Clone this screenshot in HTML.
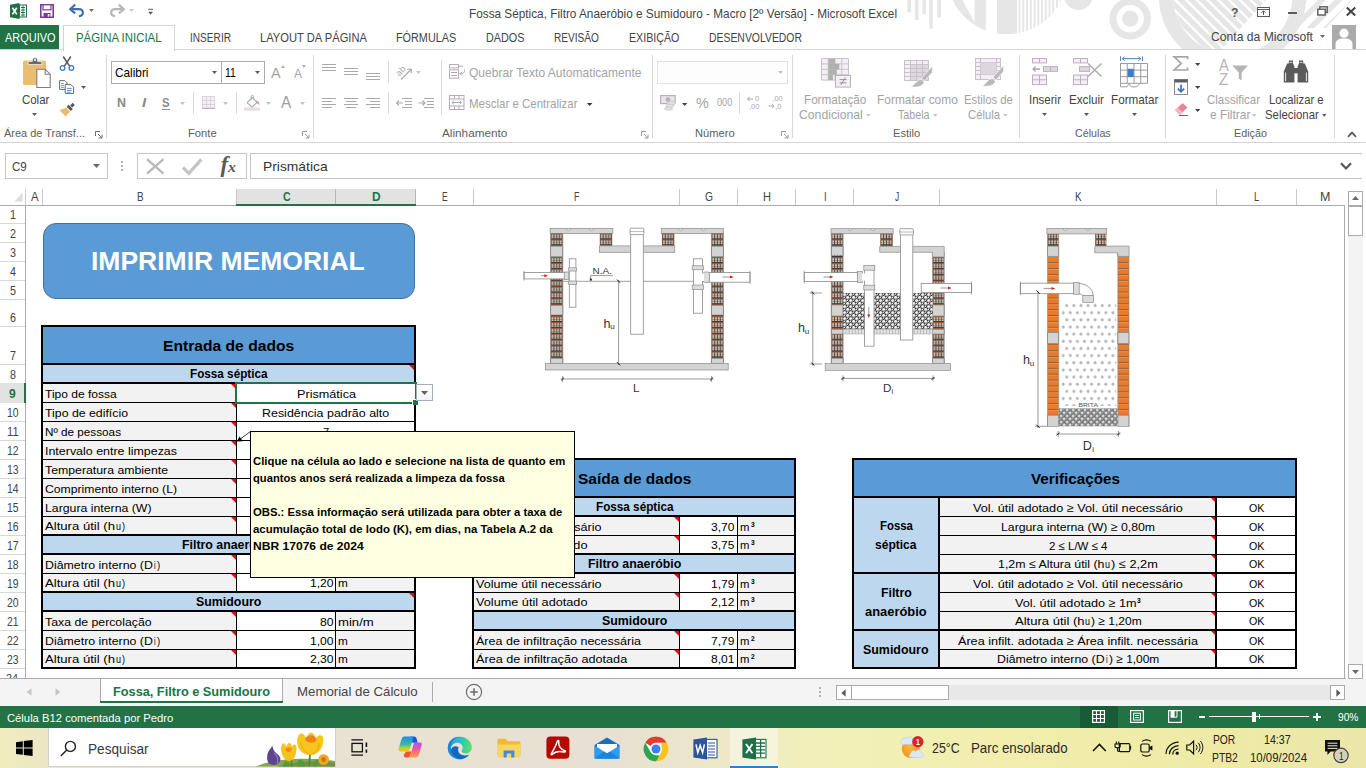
<!DOCTYPE html>
<html lang="pt-BR"><head><meta charset="utf-8"><title>Fossa Séptica, Filtro Anaeróbio e Sumidouro - Microsoft Excel</title>
<style>html,body{margin:0;padding:0;}body{width:1366px;height:768px;overflow:hidden;position:relative;background:#fff;font-family:'Liberation Sans', sans-serif;}div,span,svg{box-sizing:border-box;}svg{overflow:visible;}</style></head>
<body>
<svg style="position:absolute;left:0px;top:0px;overflow:hidden;" width="1366" height="49" viewBox="0 0 1366 49"><rect x="907.4" y="0" width="3.6" height="12.4" fill="#e6e6e6"/><rect x="914.9" y="0" width="3.7" height="20" fill="#e6e6e6"/><rect x="922.4" y="0" width="3.6" height="13.7" fill="#e6e6e6"/><rect x="929.3" y="0" width="3.5" height="28.6" fill="#e6e6e6"/><rect x="937.3" y="0" width="3.7" height="17.4" fill="#e6e6e6"/><clipPath id="cp1"><circle cx="1007" cy="-26" r="60.3"/></clipPath><g clip-path="url(#cp1)"><path d="M947 0H962.2L974.6 22V40H947Z" fill="#e6e6e6"/><rect x="974.6" y="0" width="11.2" height="40" fill="#e6e6e6"/><rect x="997" y="0" width="20" height="40" fill="#e6e6e6"/><rect x="1018.6" y="0" width="1.9" height="40" fill="#e6e6e6"/><rect x="1022.4" y="0" width="1.9" height="40" fill="#e6e6e6"/><rect x="1026.1" y="0" width="1.9" height="40" fill="#e6e6e6"/><rect x="1029.8" y="0" width="1.9" height="40" fill="#e6e6e6"/><rect x="1033.6" y="0" width="1.9" height="40" fill="#e6e6e6"/><rect x="1037.3" y="0" width="1.9" height="40" fill="#e6e6e6"/><rect x="1041.1" y="0" width="1.9" height="40" fill="#e6e6e6"/><rect x="1044.8" y="0" width="1.9" height="40" fill="#e6e6e6"/><rect x="1048.6" y="0" width="1.9" height="40" fill="#e6e6e6"/><rect x="1052.3" y="0" width="1.9" height="40" fill="#e6e6e6"/><rect x="1056.1" y="0" width="1.9" height="40" fill="#e6e6e6"/><rect x="1059.8" y="0" width="1.9" height="40" fill="#e6e6e6"/><rect x="1063.6" y="0" width="1.9" height="40" fill="#e6e6e6"/></g><circle cx="1078.5" cy="-4.3" r="14.3" fill="#e6e6e6"/><circle cx="1130.2" cy="18.7" r="17.2" fill="none" stroke="#e6e6e6" stroke-width="7"/><circle cx="1130.2" cy="18.7" r="8.1" fill="#e6e6e6"/><clipPath id="cp2"><rect x="1150" y="0" width="216" height="49"/></clipPath><g clip-path="url(#cp2)"><circle cx="1232.6" cy="-5" r="66.8" fill="none" stroke="#e6e6e6" stroke-width="14"/><clipPath id="cp3"><circle cx="1232.6" cy="-5" r="59.8"/></clipPath><clipPath id="cp5"><path d="M1150 0H1266L1222 49H1150Z"/></clipPath><g clip-path="url(#cp5)"><g clip-path="url(#cp3)"><path d="M1095.50 -10L1175.50 70" stroke="#e6e6e6" stroke-width="5.2"/><path d="M1106.25 -10L1186.25 70" stroke="#e6e6e6" stroke-width="5.2"/><path d="M1117.00 -10L1197.00 70" stroke="#e6e6e6" stroke-width="5.2"/><path d="M1127.75 -10L1207.75 70" stroke="#e6e6e6" stroke-width="5.2"/><path d="M1138.50 -10L1218.50 70" stroke="#e6e6e6" stroke-width="5.2"/><path d="M1149.25 -10L1229.25 70" stroke="#e6e6e6" stroke-width="5.2"/><path d="M1160.00 -10L1240.00 70" stroke="#e6e6e6" stroke-width="5.2"/><path d="M1170.75 -10L1250.75 70" stroke="#e6e6e6" stroke-width="5.2"/><path d="M1181.50 -10L1261.50 70" stroke="#e6e6e6" stroke-width="5.2"/><path d="M1192.25 -10L1272.25 70" stroke="#e6e6e6" stroke-width="5.2"/><path d="M1203.00 -10L1283.00 70" stroke="#e6e6e6" stroke-width="5.2"/><path d="M1213.75 -10L1293.75 70" stroke="#e6e6e6" stroke-width="5.2"/><path d="M1224.50 -10L1304.50 70" stroke="#e6e6e6" stroke-width="5.2"/><path d="M1235.25 -10L1315.25 70" stroke="#e6e6e6" stroke-width="5.2"/><path d="M1246.00 -10L1326.00 70" stroke="#e6e6e6" stroke-width="5.2"/><path d="M1256.75 -10L1336.75 70" stroke="#e6e6e6" stroke-width="5.2"/><path d="M1267.50 -10L1347.50 70" stroke="#e6e6e6" stroke-width="5.2"/><path d="M1278.25 -10L1358.25 70" stroke="#e6e6e6" stroke-width="5.2"/><path d="M1289.00 -10L1369.00 70" stroke="#e6e6e6" stroke-width="5.2"/><path d="M1299.75 -10L1379.75 70" stroke="#e6e6e6" stroke-width="5.2"/><path d="M1310.50 -10L1390.50 70" stroke="#e6e6e6" stroke-width="5.2"/><path d="M1321.25 -10L1401.25 70" stroke="#e6e6e6" stroke-width="5.2"/></g></g><clipPath id="cp4"><path d="M1292 0H1352L1326 28H1298Z"/></clipPath><g clip-path="url(#cp4)"><path d="M1262.0 60L1342.0 -20" stroke="#e6e6e6" stroke-width="5.6"/><path d="M1278.5 60L1358.5 -20" stroke="#e6e6e6" stroke-width="5.6"/><path d="M1295.0 60L1375.0 -20" stroke="#e6e6e6" stroke-width="5.6"/><path d="M1311.5 60L1391.5 -20" stroke="#e6e6e6" stroke-width="5.6"/><path d="M1328.0 60L1408.0 -20" stroke="#e6e6e6" stroke-width="5.6"/><path d="M1344.5 60L1424.5 -20" stroke="#e6e6e6" stroke-width="5.6"/><path d="M1361.0 60L1441.0 -20" stroke="#e6e6e6" stroke-width="5.6"/><path d="M1377.5 60L1457.5 -20" stroke="#e6e6e6" stroke-width="5.6"/><path d="M1394.0 60L1474.0 -20" stroke="#e6e6e6" stroke-width="5.6"/></g></g></svg>
<svg style="position:absolute;left:10px;top:3px;" width="17" height="16" viewBox="0 0 17 16"><path d="M0 1.8L9.5 0V16L0 14.2Z" fill="#1e7145"/><rect x="9.5" y="2" width="7" height="12" fill="#fff" stroke="#1e7145" stroke-width="1"/><path d="M11 4.5h4M11 7h4M11 9.5h4M11 12h4" stroke="#1e7145" stroke-width="1"/><path d="M13 2.5v11" stroke="#1e7145" stroke-width="0.8"/><path d="M2.4 4.8L6.8 11.4M6.8 4.8L2.4 11.4" stroke="#fff" stroke-width="1.7"/></svg>
<svg style="position:absolute;left:40px;top:4px;" width="14" height="14" viewBox="0 0 14 14"><path d="M0.8 0.8H13.2V13.2H0.8Z" fill="#fff" stroke="#7a3c98" stroke-width="1.6"/><rect x="3" y="0.8" width="8" height="5" fill="#fff" stroke="#7a3c98" stroke-width="1.2"/><rect x="3.5" y="9" width="7" height="4.2" fill="#7a3c98"/><rect x="7.8" y="10" width="1.6" height="2.6" fill="#fff"/></svg>
<svg style="position:absolute;left:69px;top:4px;" width="17" height="13" viewBox="0 0 17 13"><path d="M6.2 0.6L1.2 5.2L6.2 9.4" fill="none" stroke="#3a6db5" stroke-width="2.1"/><path d="M1.8 5.1H9.5C15 5.1 15.5 11.5 10 12.2" fill="none" stroke="#3a6db5" stroke-width="2.1"/></svg>
<svg style="position:absolute;left:89px;top:9px;" width="5" height="3" viewBox="0 0 5 3"><path d="M0 0H5L2.5 3Z" fill="#6a6a6a"/></svg>
<svg style="position:absolute;left:108px;top:4px;" width="17" height="13" viewBox="0 0 17 13"><path d="M10.8 0.6L15.8 5.2L10.8 9.4" fill="none" stroke="#b8b8b8" stroke-width="2.2"/><path d="M15.2 5.1H7.5C2 5.1 1.5 11.5 7 12.2" fill="none" stroke="#b8b8b8" stroke-width="2.2"/></svg>
<svg style="position:absolute;left:129px;top:9px;" width="5" height="3" viewBox="0 0 5 3"><path d="M0 0H5L2.5 3Z" fill="#c8c8c8"/></svg>
<svg style="position:absolute;left:148px;top:8px;" width="6" height="8" viewBox="0 0 6 8"><path d="M0.2 1.3H5" stroke="#5a5a5a" stroke-width="1"/><path d="M0.2 3.8H5L2.6 6.8Z" fill="#5a5a5a"/></svg>
<span style="position:absolute;left:468.50px;top:8.02px;font-family:'Liberation Sans', sans-serif;font-size:12.2px;line-height:12.2px;font-weight:400;color:#444;white-space:pre;transform-origin:0 0;transform:scaleX(0.9668);">Fossa Séptica, Filtro Anaeróbio e Sumidouro - Macro [2º Versão] - Microsoft Excel</span>
<span style="position:absolute;left:1231.00px;top:6.02px;font-family:'Liberation Sans', sans-serif;font-size:13px;line-height:13px;font-weight:700;color:#5a5a5a;white-space:pre;transform-origin:0 0;transform:scaleX(0.9430);">?</span>
<svg style="position:absolute;left:1257px;top:7px;" width="13" height="10" viewBox="0 0 13 10"><rect x="0.5" y="0.5" width="12" height="9" fill="none" stroke="#5a5a5a"/><path d="M0.5 2.5H12.5" stroke="#5a5a5a"/><path d="M6.5 8V4M4.5 5.8L6.5 3.8L8.5 5.8" fill="none" stroke="#5a5a5a"/></svg>
<div style="position:absolute;left:1288px;top:12px;width:9px;height:2px;background:#5a5a5a;"></div>
<svg style="position:absolute;left:1317px;top:6px;" width="11" height="10" viewBox="0 0 11 10"><rect x="2.8" y="0.8" width="7.4" height="5.6" fill="none" stroke="#5a5a5a" stroke-width="1.4"/><rect x="0.8" y="3.2" width="7.4" height="5.8" fill="#fff" stroke="#5a5a5a" stroke-width="1.4"/></svg>
<svg style="position:absolute;left:1346px;top:7px;" width="10" height="9" viewBox="0 0 10 9"><path d="M0.8 0.5L9.2 8.5M9.2 0.5L0.8 8.5" stroke="#444" stroke-width="2"/></svg>
<div style="position:absolute;left:0px;top:25px;width:59px;height:25px;background:#217346;"></div>
<span style="position:absolute;left:4.50px;top:32.02px;font-family:'Liberation Sans', sans-serif;font-size:12px;line-height:12px;font-weight:400;color:#fff;white-space:pre;transform-origin:0 0;transform:scaleX(0.9125);">ARQUIVO</span>
<div style="position:absolute;left:0px;top:49px;width:1366px;height:1px;background:#d4d4d4;"></div>
<div style="position:absolute;left:63px;top:25px;width:112px;height:26px;background:#fff;border:1px solid #d4d4d4;border-bottom:none;"></div>
<span style="position:absolute;left:76.00px;top:32.02px;font-family:'Liberation Sans', sans-serif;font-size:12px;line-height:12px;font-weight:400;color:#217346;white-space:pre;transform-origin:0 0;transform:scaleX(0.9497);">PÁGINA INICIAL</span>
<span style="position:absolute;left:189.50px;top:32.02px;font-family:'Liberation Sans', sans-serif;font-size:12px;line-height:12px;font-weight:400;color:#444444;white-space:pre;transform-origin:0 0;transform:scaleX(0.8421);">INSERIR</span>
<span style="position:absolute;left:260.00px;top:32.02px;font-family:'Liberation Sans', sans-serif;font-size:12px;line-height:12px;font-weight:400;color:#444444;white-space:pre;transform-origin:0 0;transform:scaleX(0.9309);">LAYOUT DA PÁGINA</span>
<span style="position:absolute;left:396.40px;top:32.02px;font-family:'Liberation Sans', sans-serif;font-size:12px;line-height:12px;font-weight:400;color:#444444;white-space:pre;transform-origin:0 0;transform:scaleX(0.9027);">FÓRMULAS</span>
<span style="position:absolute;left:486.40px;top:32.02px;font-family:'Liberation Sans', sans-serif;font-size:12px;line-height:12px;font-weight:400;color:#444444;white-space:pre;transform-origin:0 0;transform:scaleX(0.8996);">DADOS</span>
<span style="position:absolute;left:554.30px;top:32.02px;font-family:'Liberation Sans', sans-serif;font-size:12px;line-height:12px;font-weight:400;color:#444444;white-space:pre;transform-origin:0 0;transform:scaleX(0.8396);">REVISÃO</span>
<span style="position:absolute;left:629.20px;top:32.02px;font-family:'Liberation Sans', sans-serif;font-size:12px;line-height:12px;font-weight:400;color:#444444;white-space:pre;transform-origin:0 0;transform:scaleX(0.8891);">EXIBIÇÃO</span>
<span style="position:absolute;left:709.00px;top:32.02px;font-family:'Liberation Sans', sans-serif;font-size:12px;line-height:12px;font-weight:400;color:#444444;white-space:pre;transform-origin:0 0;transform:scaleX(0.8680);">DESENVOLVEDOR</span>
<span style="position:absolute;left:1211.00px;top:31.02px;font-family:'Liberation Sans', sans-serif;font-size:12.2px;line-height:12.2px;font-weight:400;color:#444444;white-space:pre;transform-origin:0 0;transform:scaleX(0.9971);">Conta da Microsoft</span>
<svg style="position:absolute;left:1320px;top:35px;" width="5" height="3" viewBox="0 0 5 3"><path d="M0 0H5L2.5 3Z" fill="#6a6a6a"/></svg>
<svg style="position:absolute;left:1332px;top:25px;" width="24" height="24" viewBox="0 0 24 24"><rect width="24" height="24" fill="#ababab"/><circle cx="12" cy="8.2" r="4.6" fill="#fff"/><path d="M3.5 24V19.5C3.5 15 7 13.6 12 13.6S20.5 15 20.5 19.5V24Z" fill="#fff"/></svg>
<div style="position:absolute;left:0px;top:142px;width:1366px;height:1px;background:#d4d4d4;"></div>
<div style="position:absolute;left:106px;top:55px;width:1px;height:83px;background:#d9d9d9;"></div>
<div style="position:absolute;left:313px;top:55px;width:1px;height:83px;background:#d9d9d9;"></div>
<div style="position:absolute;left:652px;top:55px;width:1px;height:83px;background:#d9d9d9;"></div>
<div style="position:absolute;left:792px;top:55px;width:1px;height:83px;background:#d9d9d9;"></div>
<div style="position:absolute;left:1019px;top:55px;width:1px;height:83px;background:#d9d9d9;"></div>
<div style="position:absolute;left:1165px;top:55px;width:1px;height:83px;background:#d9d9d9;"></div>
<div style="position:absolute;left:1334px;top:55px;width:1px;height:83px;background:#d9d9d9;"></div>
<div style="position:absolute;left:193px;top:92px;width:1px;height:22px;background:#d9d9d9;"></div>
<div style="position:absolute;left:236px;top:92px;width:1px;height:22px;background:#d9d9d9;"></div>
<div style="position:absolute;left:388px;top:61px;width:1px;height:22px;background:#d9d9d9;"></div>
<div style="position:absolute;left:388px;top:92px;width:1px;height:22px;background:#d9d9d9;"></div>
<div style="position:absolute;left:441px;top:60px;width:1px;height:55px;background:#d9d9d9;"></div>
<div style="position:absolute;left:739px;top:92px;width:1px;height:22px;background:#d9d9d9;"></div>
<span style="position:absolute;left:4.20px;top:127.02px;font-family:'Liberation Sans', sans-serif;font-size:11.6px;line-height:11.6px;font-weight:400;color:#5e5e5e;white-space:pre;transform-origin:0 0;transform:scaleX(0.9450);">Área de Transf...</span>
<span style="position:absolute;left:187.70px;top:127.02px;font-family:'Liberation Sans', sans-serif;font-size:11.6px;line-height:11.6px;font-weight:400;color:#5e5e5e;white-space:pre;transform-origin:0 0;transform:scaleX(0.9678);">Fonte</span>
<span style="position:absolute;left:442.20px;top:127.02px;font-family:'Liberation Sans', sans-serif;font-size:11.6px;line-height:11.6px;font-weight:400;color:#5e5e5e;white-space:pre;transform-origin:0 0;transform:scaleX(1.0147);">Alinhamento</span>
<span style="position:absolute;left:694.70px;top:127.02px;font-family:'Liberation Sans', sans-serif;font-size:11.6px;line-height:11.6px;font-weight:400;color:#5e5e5e;white-space:pre;transform-origin:0 0;transform:scaleX(0.9600);">Número</span>
<span style="position:absolute;left:892.50px;top:127.02px;font-family:'Liberation Sans', sans-serif;font-size:11.6px;line-height:11.6px;font-weight:400;color:#5e5e5e;white-space:pre;transform-origin:0 0;transform:scaleX(0.9626);">Estilo</span>
<span style="position:absolute;left:1074.80px;top:127.02px;font-family:'Liberation Sans', sans-serif;font-size:11.6px;line-height:11.6px;font-weight:400;color:#5e5e5e;white-space:pre;transform-origin:0 0;transform:scaleX(0.9232);">Células</span>
<span style="position:absolute;left:1233.80px;top:127.02px;font-family:'Liberation Sans', sans-serif;font-size:11.6px;line-height:11.6px;font-weight:400;color:#5e5e5e;white-space:pre;transform-origin:0 0;transform:scaleX(0.9308);">Edição</span>
<svg style="position:absolute;left:95px;top:130.5px;" width="8" height="8" viewBox="0 0 8 8"><path d="M0.5 5V0.5H5" fill="none" stroke="#6e6e6e" stroke-width="1"/><path d="M3 3L7 7M7 3.5V7H3.5" fill="none" stroke="#6e6e6e" stroke-width="1"/></svg>
<svg style="position:absolute;left:302px;top:130.5px;" width="8" height="8" viewBox="0 0 8 8"><path d="M0.5 5V0.5H5" fill="none" stroke="#9a9a9a" stroke-width="1"/><path d="M3 3L7 7M7 3.5V7H3.5" fill="none" stroke="#9a9a9a" stroke-width="1"/></svg>
<svg style="position:absolute;left:641px;top:130.5px;" width="8" height="8" viewBox="0 0 8 8"><path d="M0.5 5V0.5H5" fill="none" stroke="#9a9a9a" stroke-width="1"/><path d="M3 3L7 7M7 3.5V7H3.5" fill="none" stroke="#9a9a9a" stroke-width="1"/></svg>
<svg style="position:absolute;left:781px;top:130.5px;" width="8" height="8" viewBox="0 0 8 8"><path d="M0.5 5V0.5H5" fill="none" stroke="#9a9a9a" stroke-width="1"/><path d="M3 3L7 7M7 3.5V7H3.5" fill="none" stroke="#9a9a9a" stroke-width="1"/></svg>
<svg style="position:absolute;left:22px;top:57px;" width="30" height="32" viewBox="0 0 30 32"><rect x="1" y="3.5" width="23" height="24.5" rx="1.5" fill="#eabe72"/><path d="M6.2 7.6V4.4H10.4V2.8C10.4 0.2 15.6 0.2 15.6 2.8V4.4H19.8V7.6Z" fill="#6b6b6b" stroke="#fff" stroke-width="0.7"/><circle cx="13" cy="3" r="1.1" fill="#fff"/><path d="M14.8 12.2H23.2L28.2 17.2V30.5H14.8Z" fill="#fff" stroke="#7e7e7e" stroke-width="1.1"/><path d="M23.2 12.2V17.2H28.2" fill="none" stroke="#7e7e7e" stroke-width="1.1"/></svg>
<span style="position:absolute;left:21.50px;top:94.02px;font-family:'Liberation Sans', sans-serif;font-size:12.4px;line-height:12.4px;font-weight:400;color:#444444;white-space:pre;transform-origin:0 0;transform:scaleX(0.9220);">Colar</span>
<svg style="position:absolute;left:32px;top:113.4px;" width="5" height="3" viewBox="0 0 5 3"><path d="M0 0H5L2.5 3Z" fill="#5a5a5a"/></svg>
<svg style="position:absolute;left:59px;top:56px;" width="16" height="15" viewBox="0 0 16 15"><path d="M4.2 0.5L10.6 10.2M11.8 0.5L5.4 10.2" stroke="#5a5a5a" stroke-width="1.5"/><circle cx="3.6" cy="12" r="2.3" fill="none" stroke="#3d78c4" stroke-width="1.3"/><circle cx="12.4" cy="12" r="2.3" fill="none" stroke="#3d78c4" stroke-width="1.3"/></svg>
<svg style="position:absolute;left:59px;top:80px;" width="16" height="14" viewBox="0 0 16 14"><path d="M0.6 0.6H5.8L8 2.8V9.4H0.6Z" fill="#fff" stroke="#6a6a6a" stroke-width="1"/><path d="M2 3.6H4.8M2 5.6H4.8M2 7.4H4.8" stroke="#3d78c4" stroke-width="0.8"/><path d="M6.2 4.4H11.8L14.6 7.2V13.4H6.2Z" fill="#fff" stroke="#6a6a6a" stroke-width="1"/><path d="M8 8.4H12.8M8 10.4H12.8M8 12.2H11.6" stroke="#3d78c4" stroke-width="0.8"/></svg>
<svg style="position:absolute;left:81px;top:86.4px;" width="5" height="3" viewBox="0 0 5 3"><path d="M0 0H5L2.5 3Z" fill="#5a5a5a"/></svg>
<svg style="position:absolute;left:59px;top:102px;" width="17" height="15" viewBox="0 0 17 15"><path d="M0.5 8.2L7 5.6L11.2 9.8L6.6 14.5Z" fill="#eabe72"/><path d="M7.6 4.8L9.6 2.8L13.8 7L11.8 9Z" fill="#555"/><path d="M11.2 3.4L13.6 0.8L15.8 3L13.2 5.4Z" fill="#555"/></svg>
<div style="position:absolute;left:111px;top:61px;width:111px;height:23px;background:#fff;border:1px solid #ababab;"></div>
<div style="position:absolute;left:221px;top:61px;width:44px;height:23px;background:#fff;border:1px solid #ababab;"></div>
<span style="position:absolute;left:114.50px;top:67.02px;font-family:'Liberation Sans', sans-serif;font-size:12.4px;line-height:12.4px;font-weight:400;color:#000;white-space:pre;transform-origin:0 0;transform:scaleX(0.9537);">Calibri</span>
<span style="position:absolute;left:225.30px;top:67.02px;font-family:'Liberation Sans', sans-serif;font-size:12.4px;line-height:12.4px;font-weight:400;color:#000;white-space:pre;transform-origin:0 0;transform:scaleX(0.8388);">11</span>
<svg style="position:absolute;left:212px;top:71px;" width="5" height="3" viewBox="0 0 5 3"><path d="M0 0H5L2.5 3Z" fill="#5a5a5a"/></svg>
<svg style="position:absolute;left:255px;top:71px;" width="5" height="3" viewBox="0 0 5 3"><path d="M0 0H5L2.5 3Z" fill="#5a5a5a"/></svg>
<span style="position:absolute;left:271.40px;top:66.02px;font-family:'Liberation Sans', sans-serif;font-size:14.5px;line-height:14.5px;font-weight:400;color:#a3a3a3;white-space:pre;transform-origin:0 0;transform:scaleX(0.9926);">A</span>
<svg style="position:absolute;left:281px;top:64.6px;" width="4" height="3" viewBox="0 0 4 3"><path d="M0 3H4L2 0Z" fill="#b0b0b0"/></svg>
<span style="position:absolute;left:294.00px;top:68.02px;font-family:'Liberation Sans', sans-serif;font-size:12.5px;line-height:12.5px;font-weight:400;color:#a3a3a3;white-space:pre;transform-origin:0 0;transform:scaleX(0.9588);">A</span>
<svg style="position:absolute;left:302px;top:65.4px;" width="4" height="3" viewBox="0 0 4 3"><path d="M0 0H4L2 3Z" fill="#b0b0b0"/></svg>
<span style="position:absolute;left:117.40px;top:97.02px;font-family:'Liberation Sans', sans-serif;font-size:12.2px;line-height:12.2px;font-weight:700;color:#8a8a8a;white-space:pre;transform-origin:0 0;transform:scaleX(1.0213);">N</span>
<span style="position:absolute;left:141.60px;top:97.02px;font-family:'Liberation Sans', sans-serif;font-size:12.2px;line-height:12.2px;font-weight:700;color:#8a8a8a;white-space:pre;transform-origin:0 0;transform:scaleX(1.2387);font-style:italic;">I</span>
<span style="position:absolute;left:162.40px;top:97.02px;font-family:'Liberation Sans', sans-serif;font-size:12.2px;line-height:12.2px;font-weight:700;color:#8a8a8a;white-space:pre;transform-origin:0 0;transform:scaleX(0.9336);">S</span>
<div style="position:absolute;left:162px;top:108.6px;width:8px;height:1px;background:#8e8e8e;"></div>
<svg style="position:absolute;left:180px;top:101.5px;" width="5" height="3" viewBox="0 0 5 3"><path d="M0 0H5L2.5 3Z" fill="#c0c0c0"/></svg>
<svg style="position:absolute;left:202px;top:96px;" width="14" height="14" viewBox="0 0 14 14"><rect x="0" y="0" width="13" height="11" fill="#f4eff5"/><path d="M0.5 0.5H12.5M0.5 4.5H12.5M0.5 8.5H12.5M0.5 0.5V11M4.5 0.5V11M8.5 0.5V11M12.5 0.5V11" stroke="#c9bcd0" stroke-width="1" stroke-dasharray="1 1"/><path d="M0 12.3H13.2" stroke="#b4b4b4" stroke-width="1.4"/></svg>
<svg style="position:absolute;left:223px;top:101.5px;" width="5" height="3" viewBox="0 0 5 3"><path d="M0 0H5L2.5 3Z" fill="#c0c0c0"/></svg>
<svg style="position:absolute;left:244px;top:95px;" width="17" height="16" viewBox="0 0 17 16"><path d="M3.2 7.6L8.2 2.6L13 7.4L8 12.2Z" fill="#fff" stroke="#a9a9a9" stroke-width="1.1"/><path d="M7.2 5.2V1.6C7.2 0 9.6 0 9.6 1.6V4" fill="none" stroke="#a9a9a9" stroke-width="1"/><path d="M12.2 5.2C15 6 15.8 8.6 15.2 10.6C14.4 9 13.6 8.4 12.6 8Z" fill="#a9a9a9"/><rect x="0" y="12.4" width="16" height="3.4" fill="#e6dfe6"/></svg>
<svg style="position:absolute;left:266px;top:101.5px;" width="5" height="3" viewBox="0 0 5 3"><path d="M0 0H5L2.5 3Z" fill="#c0c0c0"/></svg>
<span style="position:absolute;left:281.20px;top:95.02px;font-family:'Liberation Sans', sans-serif;font-size:15.6px;line-height:15.6px;font-weight:400;color:#9c9c9c;white-space:pre;transform-origin:0 0;transform:scaleX(0.9802);">A</span>
<svg style="position:absolute;left:300px;top:101.5px;" width="5" height="3" viewBox="0 0 5 3"><path d="M0 0H5L2.5 3Z" fill="#c0c0c0"/></svg>
<svg style="position:absolute;left:322px;top:0px;" width="14" height="120" viewBox="0 0 14 120"><path d="M0 64.5H14" stroke="#a9a9a9" stroke-width="1"/><path d="M0 67.5H14" stroke="#a9a9a9" stroke-width="1"/><path d="M0 70.5H14" stroke="#a9a9a9" stroke-width="1"/></svg>
<svg style="position:absolute;left:344px;top:0px;" width="14" height="120" viewBox="0 0 14 120"><path d="M0 68.5H14" stroke="#a9a9a9" stroke-width="1"/><path d="M0 71.5H14" stroke="#a9a9a9" stroke-width="1"/><path d="M0 74.5H14" stroke="#a9a9a9" stroke-width="1"/></svg>
<svg style="position:absolute;left:366px;top:0px;" width="14" height="120" viewBox="0 0 14 120"><path d="M0 73.5H14" stroke="#a9a9a9" stroke-width="1"/><path d="M0 76.5H14" stroke="#a9a9a9" stroke-width="1"/><path d="M0 79.5H14" stroke="#a9a9a9" stroke-width="1"/></svg>
<svg style="position:absolute;left:322px;top:0px;" width="14" height="120" viewBox="0 0 14 120"><path d="M0 98.5H14" stroke="#a9a9a9" stroke-width="1"/><path d="M0 101.5H10" stroke="#a9a9a9" stroke-width="1"/><path d="M0 104.5H14" stroke="#a9a9a9" stroke-width="1"/><path d="M0 107.5H10" stroke="#a9a9a9" stroke-width="1"/></svg>
<svg style="position:absolute;left:344px;top:0px;" width="14" height="120" viewBox="0 0 14 120"><path d="M0.0 98.5H14.0" stroke="#a9a9a9" stroke-width="1"/><path d="M2.0 101.5H12.0" stroke="#a9a9a9" stroke-width="1"/><path d="M0.0 104.5H14.0" stroke="#a9a9a9" stroke-width="1"/><path d="M2.0 107.5H12.0" stroke="#a9a9a9" stroke-width="1"/></svg>
<svg style="position:absolute;left:366px;top:0px;" width="14" height="120" viewBox="0 0 14 120"><path d="M0 98.5H14" stroke="#a9a9a9" stroke-width="1"/><path d="M4 101.5H14" stroke="#a9a9a9" stroke-width="1"/><path d="M0 104.5H14" stroke="#a9a9a9" stroke-width="1"/><path d="M4 107.5H14" stroke="#a9a9a9" stroke-width="1"/></svg>
<svg style="position:absolute;left:396px;top:63px;" width="18" height="18" viewBox="0 0 18 18"><text x="0" y="10" font-family="Liberation Sans, sans-serif" font-size="9" fill="#a9a9a9" transform="rotate(-45 6 8)">ab</text><path d="M5 16.5L15 6.5M11.2 6.2H15.3V10.3" fill="none" stroke="#a9a9a9" stroke-width="1.1"/></svg>
<svg style="position:absolute;left:416px;top:71px;" width="5" height="3" viewBox="0 0 5 3"><path d="M0 0H5L2.5 3Z" fill="#c8c8c8"/></svg>
<svg style="position:absolute;left:396px;top:97px;" width="16" height="12" viewBox="0 0 16 12"><path d="M6 1.5H16M9 4.5H16M9 7.5H16M6 10.5H16" stroke="#a9a9a9" stroke-width="1"/><path d="M0.5 6H7M3 3.5L0.5 6L3 8.5" fill="none" stroke="#a9a9a9" stroke-width="1.1"/></svg>
<svg style="position:absolute;left:418px;top:97px;" width="16" height="12" viewBox="0 0 16 12"><path d="M6 1.5H16M9 4.5H16M9 7.5H16M6 10.5H16" stroke="#a9a9a9" stroke-width="1"/><path d="M0.5 6H7M4.5 3.5L7 6L4.5 8.5" fill="none" stroke="#a9a9a9" stroke-width="1.1"/></svg>
<svg style="position:absolute;left:449px;top:64px;" width="16" height="15" viewBox="0 0 16 15"><rect x="0.5" y="0.5" width="9" height="3.4" fill="none" stroke="#b9a9bd"/><path d="M10 2.2H14" stroke="#a9a9a9"/><rect x="0.5" y="5.8" width="9" height="8.4" fill="none" stroke="#b9a9bd"/><path d="M2 8.5H8M2 11.5H8" stroke="#a9a9a9"/><path d="M15.5 5.5C15.8 9 14 9.8 11 9.8M12.8 8L11 9.8L12.8 11.6" fill="none" stroke="#a9a9a9" stroke-width="1"/></svg>
<span style="position:absolute;left:468.50px;top:67.02px;font-family:'Liberation Sans', sans-serif;font-size:12.4px;line-height:12.4px;font-weight:400;color:#a3a3a3;white-space:pre;transform-origin:0 0;transform:scaleX(0.9720);">Quebrar Texto Automaticamente</span>
<svg style="position:absolute;left:449px;top:95px;" width="16" height="15" viewBox="0 0 16 15"><rect x="0.5" y="0.5" width="14.5" height="14" fill="#fff" stroke="#b9a9bd"/><path d="M0.5 4H15M0.5 11H15M5.5 0.5V4M10 0.5V4M5.5 11V14.5M10 11V14.5" stroke="#b9a9bd"/><path d="M3 7.5H12.5M4.8 5.8L3 7.5L4.8 9.2M10.7 5.8L12.5 7.5L10.7 9.2" fill="none" stroke="#a9a9a9" stroke-width="1"/></svg>
<span style="position:absolute;left:468.50px;top:98.02px;font-family:'Liberation Sans', sans-serif;font-size:12.4px;line-height:12.4px;font-weight:400;color:#a3a3a3;white-space:pre;transform-origin:0 0;transform:scaleX(0.9269);">Mesclar e Centralizar</span>
<svg style="position:absolute;left:587px;top:102.6px;" width="5.4" height="3" viewBox="0 0 5.4 3"><path d="M0 0H5.4L2.7 3Z" fill="#333"/></svg>
<div style="position:absolute;left:657px;top:61px;width:131px;height:23px;background:#fdfdfd;border:1px solid #e1e1e1;"></div>
<svg style="position:absolute;left:778px;top:71px;" width="5" height="3" viewBox="0 0 5 3"><path d="M0 0H5L2.5 3Z" fill="#c0c0c0"/></svg>
<svg style="position:absolute;left:660px;top:95px;" width="17" height="16" viewBox="0 0 17 16"><rect x="0.6" y="0.6" width="14.6" height="8" fill="#e9e4ea" stroke="#b4b4b4" stroke-width="1.2"/><circle cx="8" cy="4.6" r="2.4" fill="#b4b4b4"/><ellipse cx="11.5" cy="8" rx="4.2" ry="1.6" fill="#e2e2e2" stroke="#c4c4c4" stroke-width="0.7"/><ellipse cx="10" cy="10.8" rx="4.2" ry="1.6" fill="#e2e2e2" stroke="#c4c4c4" stroke-width="0.7"/><ellipse cx="8.5" cy="13.6" rx="4.2" ry="1.6" fill="#e2e2e2" stroke="#c4c4c4" stroke-width="0.7"/></svg>
<svg style="position:absolute;left:682px;top:102.6px;" width="5.4" height="3" viewBox="0 0 5.4 3"><path d="M0 0H5.4L2.7 3Z" fill="#444"/></svg>
<span style="position:absolute;left:696.40px;top:96.02px;font-family:'Liberation Sans', sans-serif;font-size:14.6px;line-height:14.6px;font-weight:400;color:#a3a3a3;white-space:pre;transform-origin:0 0;transform:scaleX(0.9858);">%</span>
<span style="position:absolute;left:716.60px;top:98.02px;font-family:'Liberation Sans', sans-serif;font-size:10px;line-height:10px;font-weight:400;color:#a3a3a3;white-space:pre;transform-origin:0 0;transform:scaleX(0.9109);">000</span>
<svg style="position:absolute;left:747px;top:95px;" width="15" height="16" viewBox="0 0 15 16"><path d="M0.6 4H6M2.6 1.8L0.6 4L2.6 6.2" fill="none" stroke="#a9a9a9" stroke-width="1"/><text x="8" y="6.2" font-family="Liberation Sans, sans-serif" font-size="7.4" fill="#a9a9a9">0</text><text x="2" y="14.4" font-family="Liberation Sans, sans-serif" font-size="7.4" fill="#a9a9a9">,00</text></svg>
<svg style="position:absolute;left:768px;top:95px;" width="16" height="16" viewBox="0 0 16 16"><text x="4.4" y="6.2" font-family="Liberation Sans, sans-serif" font-size="7.4" fill="#a9a9a9">,00</text><path d="M0.4 11H6M4 8.8L6 11L4 13.2" fill="none" stroke="#a9a9a9" stroke-width="1"/><text x="7.2" y="14.4" font-family="Liberation Sans, sans-serif" font-size="7.4" fill="#a9a9a9">,0</text></svg>
<svg style="position:absolute;left:821px;top:58px;" width="31" height="30" viewBox="0 0 31 30"><rect x="0.5" y="0.5" width="27" height="21.6" fill="#f3eff4"/><path d="M0.5 0.5H27.5" stroke="#c9c2cc"/><path d="M0.5 5.9H27.5" stroke="#c9c2cc"/><path d="M0.5 11.3H27.5" stroke="#c9c2cc"/><path d="M0.5 16.700000000000003H27.5" stroke="#c9c2cc"/><path d="M0.5 22.1H27.5" stroke="#c9c2cc"/><path d="M0.5 0.5V22.1" stroke="#c9c2cc"/><path d="M7.25 0.5V22.1" stroke="#c9c2cc"/><path d="M14.0 0.5V22.1" stroke="#c9c2cc"/><path d="M20.75 0.5V22.1" stroke="#c9c2cc"/><path d="M27.5 0.5V22.1" stroke="#c9c2cc"/><rect x="7.3" y="0.5" width="6.7" height="5.4" fill="#b1b1b1"/><rect x="7.3" y="5.9" width="11" height="5.4" fill="#b1b1b1"/><rect x="7.3" y="11.3" width="8.5" height="5.4" fill="#b1b1b1"/><rect x="7.3" y="16.7" width="4.6" height="5.4" fill="#b1b1b1"/><rect x="14.5" y="17.5" width="15" height="11.6" fill="#f3eff4" stroke="#b4b4b4"/><path d="M18.6 21.6H25.6M18.6 24.8H25.6M24.4 19.6L19.8 27" stroke="#8c8c8c" stroke-width="0.9"/></svg>
<span style="position:absolute;left:804.20px;top:94.02px;font-family:'Liberation Sans', sans-serif;font-size:12.4px;line-height:12.4px;font-weight:400;color:#a3a3a3;white-space:pre;transform-origin:0 0;transform:scaleX(0.9422);">Formatação</span>
<span style="position:absolute;left:799.20px;top:109.02px;font-family:'Liberation Sans', sans-serif;font-size:12.4px;line-height:12.4px;font-weight:400;color:#a3a3a3;white-space:pre;transform-origin:0 0;transform:scaleX(0.9853);">Condicional</span>
<svg style="position:absolute;left:865.6px;top:113.6px;" width="4.6" height="2.8" viewBox="0 0 4.6 2.8"><path d="M0 0H4.6L2.3 2.8Z" fill="#c4c4c4"/></svg>
<svg style="position:absolute;left:904px;top:60px;" width="30" height="28" viewBox="0 0 30 28"><rect x="0.5" y="0.5" width="24" height="20" fill="#f3eff4"/><rect x="6.5" y="4.5" width="18" height="16" fill="#dcd8de"/><path d="M0.5 0.5H24.5" stroke="#c9c2cc"/><path d="M0.5 4.5H24.5" stroke="#c9c2cc"/><path d="M0.5 8.5H24.5" stroke="#c9c2cc"/><path d="M0.5 12.5H24.5" stroke="#c9c2cc"/><path d="M0.5 16.5H24.5" stroke="#c9c2cc"/><path d="M0.5 20.5H24.5" stroke="#c9c2cc"/><path d="M0.5 0.5V20.5" stroke="#c9c2cc"/><path d="M6.5 0.5V20.5" stroke="#c9c2cc"/><path d="M12.5 0.5V20.5" stroke="#c9c2cc"/><path d="M18.5 0.5V20.5" stroke="#c9c2cc"/><path d="M24.5 0.5V20.5" stroke="#c9c2cc"/><path d="M17.6 18.2l10.8 -12v6l-7.6 8.6Z" fill="#b9b9b9" stroke="#fff" stroke-width="0.6"/><path d="M17.2 19.4c-4 0.2 -4.8 3.4 -9.8 7.4c5.6 1 11.4 -0.6 12.8 -4.6Z" fill="#b9b9b9" stroke="#fff" stroke-width="0.6"/></svg>
<span style="position:absolute;left:876.50px;top:94.02px;font-family:'Liberation Sans', sans-serif;font-size:12.4px;line-height:12.4px;font-weight:400;color:#a3a3a3;white-space:pre;transform-origin:0 0;transform:scaleX(0.9619);">Formatar como</span>
<span style="position:absolute;left:897.90px;top:109.02px;font-family:'Liberation Sans', sans-serif;font-size:12.4px;line-height:12.4px;font-weight:400;color:#a3a3a3;white-space:pre;transform-origin:0 0;transform:scaleX(0.8626);">Tabela</span>
<svg style="position:absolute;left:932.6px;top:113.6px;" width="4.6" height="2.8" viewBox="0 0 4.6 2.8"><path d="M0 0H4.6L2.3 2.8Z" fill="#c4c4c4"/></svg>
<svg style="position:absolute;left:975px;top:58px;" width="30" height="30" viewBox="0 0 30 30"><rect x="0.5" y="0.5" width="25" height="21" fill="#f3eff4" stroke="#c9c2cc"/><path d="M0.5 4.5H25.5M0.5 16.5H25.5M5.5 0.5V21.5M21.5 0.5V21.5M0.5 8.5H5.5M0.5 12.5H5.5M21.5 8.5H25.5M21.5 12.5H25.5" stroke="#c9c2cc"/><rect x="5.5" y="4.5" width="16" height="12" fill="#dbd7dc"/><path d="M17.8 19.4l10.8 -12v6l-7.6 8.6Z" fill="#b9b9b9" stroke="#fff" stroke-width="0.6"/><path d="M17.4 20.6c-4 0.2 -4.8 3.4 -9.8 7.4c5.6 1 11.4 -0.6 12.8 -4.6Z" fill="#b9b9b9" stroke="#fff" stroke-width="0.6"/></svg>
<span style="position:absolute;left:963.60px;top:94.02px;font-family:'Liberation Sans', sans-serif;font-size:12.4px;line-height:12.4px;font-weight:400;color:#a3a3a3;white-space:pre;transform-origin:0 0;transform:scaleX(0.9082);">Estilos de</span>
<span style="position:absolute;left:967.80px;top:109.02px;font-family:'Liberation Sans', sans-serif;font-size:12.4px;line-height:12.4px;font-weight:400;color:#a3a3a3;white-space:pre;transform-origin:0 0;transform:scaleX(0.9106);">Célula</span>
<svg style="position:absolute;left:1003px;top:113.6px;" width="4.6" height="2.8" viewBox="0 0 4.6 2.8"><path d="M0 0H4.6L2.3 2.8Z" fill="#c4c4c4"/></svg>
<svg style="position:absolute;left:1032px;top:58px;" width="27" height="28" viewBox="0 0 27 28"><rect x="0.5" y="0.5" width="14" height="4.4" fill="#f3eff4" stroke="#bdb1c1"/><path d="M7.5 0.5V5" stroke="#bdb1c1"/><rect x="11.5" y="8.6" width="14" height="4.8" fill="#dcd8de" stroke="#bdb1c1"/><path d="M18.5 8.6V13.4" stroke="#bdb1c1"/><path d="M1 11H8M3.6 8.4L1 11L3.6 13.6" fill="none" stroke="#a9a9a9" stroke-width="1.3"/><rect x="0.5" y="17" width="14" height="9.6" fill="#f3eff4" stroke="#bdb1c1"/><path d="M7.5 17V26.6M0.5 21.8H14.5" stroke="#bdb1c1"/></svg>
<span style="position:absolute;left:1029.20px;top:94.02px;font-family:'Liberation Sans', sans-serif;font-size:12.4px;line-height:12.4px;font-weight:400;color:#444444;white-space:pre;transform-origin:0 0;transform:scaleX(0.9292);">Inserir</span>
<svg style="position:absolute;left:1042.4px;top:113.4px;" width="5" height="3" viewBox="0 0 5 3"><path d="M0 0H5L2.5 3Z" fill="#5a5a5a"/></svg>
<svg style="position:absolute;left:1073px;top:58px;" width="30" height="28" viewBox="0 0 30 28"><rect x="0.5" y="0.5" width="14" height="4.4" fill="#f3eff4" stroke="#bdb1c1"/><path d="M7.5 0.5V5" stroke="#bdb1c1"/><rect x="6.5" y="8.6" width="10" height="4.8" fill="#dcd8de" stroke="#bdb1c1"/><rect x="0.5" y="17" width="14" height="9.6" fill="#f3eff4" stroke="#bdb1c1"/><path d="M7.5 17V26.6M0.5 21.8H14.5" stroke="#bdb1c1"/><path d="M15 5.5L28.5 18.5M28.5 5.5L15 18.5" stroke="#b0b0b0" stroke-width="1.6"/></svg>
<span style="position:absolute;left:1069.20px;top:94.02px;font-family:'Liberation Sans', sans-serif;font-size:12.4px;line-height:12.4px;font-weight:400;color:#444444;white-space:pre;transform-origin:0 0;transform:scaleX(0.9412);">Excluir</span>
<svg style="position:absolute;left:1084px;top:113.4px;" width="5" height="3" viewBox="0 0 5 3"><path d="M0 0H5L2.5 3Z" fill="#5a5a5a"/></svg>
<svg style="position:absolute;left:1120px;top:56px;" width="28" height="32" viewBox="0 0 28 32"><rect x="0.5" y="7.5" width="27" height="19.8" fill="#fff"/><path d="M0.5 7.5H27.5" stroke="#9c9c9c"/><path d="M0.5 14.1H27.5" stroke="#9c9c9c"/><path d="M0.5 20.7H27.5" stroke="#9c9c9c"/><path d="M0.5 27.299999999999997H27.5" stroke="#9c9c9c"/><path d="M0.5 7.5V27.3" stroke="#9c9c9c"/><path d="M7.25 7.5V27.3" stroke="#9c9c9c"/><path d="M14.0 7.5V27.3" stroke="#9c9c9c"/><path d="M20.75 7.5V27.3" stroke="#9c9c9c"/><path d="M27.5 7.5V27.3" stroke="#9c9c9c"/><rect x="7.6" y="12.8" width="6.2" height="8.2" fill="#3f7dc4"/><path d="M0.5 27.3V30.8H7L8.6 28.4H9.6L11.2 30.8H17L20 27.3" fill="none" stroke="#9c9c9c"/><path d="M0.6 0.4V5M22.4 0.4V5M2.4 2.7H20.6M4.6 0.8L2.4 2.7L4.6 4.6M18.4 0.8L20.6 2.7L18.4 4.6" fill="none" stroke="#3f7dc4" stroke-width="1"/></svg>
<span style="position:absolute;left:1110.60px;top:94.02px;font-family:'Liberation Sans', sans-serif;font-size:12.4px;line-height:12.4px;font-weight:400;color:#444444;white-space:pre;transform-origin:0 0;transform:scaleX(0.9430);">Formatar</span>
<svg style="position:absolute;left:1132.2px;top:113.4px;" width="5" height="3" viewBox="0 0 5 3"><path d="M0 0H5L2.5 3Z" fill="#5a5a5a"/></svg>
<svg style="position:absolute;left:1173px;top:56px;" width="16" height="15" viewBox="0 0 16 15"><path d="M14.6 3.2V0.8H1.2L8.2 7.4L1.2 14H14.6V11.6" fill="none" stroke="#a6a6a6" stroke-width="1.7"/></svg>
<svg style="position:absolute;left:1194.6px;top:63px;" width="5.4" height="3" viewBox="0 0 5.4 3"><path d="M0 0H5.4L2.7 3Z" fill="#444"/></svg>
<svg style="position:absolute;left:1174px;top:79px;" width="14" height="16" viewBox="0 0 14 16"><rect x="0.5" y="0.5" width="13" height="15" fill="#fff" stroke="#8a8a8a"/><rect x="0.5" y="0.5" width="13" height="3" fill="#5e5e5e"/><path d="M7 5.6V12.6M3.8 9.6L7 12.8L10.2 9.6" fill="none" stroke="#2f74c8" stroke-width="1.7"/></svg>
<svg style="position:absolute;left:1194.6px;top:86px;" width="5.4" height="3" viewBox="0 0 5.4 3"><path d="M0 0H5.4L2.7 3Z" fill="#444"/></svg>
<svg style="position:absolute;left:1174px;top:102px;" width="15" height="15" viewBox="0 0 15 15"><path d="M1 8.2L8.6 1L13.4 5.6L6 12.8Z" fill="#e8849a"/><path d="M1 8.2L3.8 5.6L8.6 10.2L6 12.8Z" fill="#f4b3c0"/><path d="M5 13.5H14" stroke="#6a6a6a" stroke-width="1"/></svg>
<svg style="position:absolute;left:1194.6px;top:109px;" width="5.4" height="3" viewBox="0 0 5.4 3"><path d="M0 0H5.4L2.7 3Z" fill="#444"/></svg>
<span style="position:absolute;left:1219.00px;top:58.02px;font-family:'Liberation Sans', sans-serif;font-size:15.6px;line-height:15.6px;font-weight:400;color:#b4b4b4;white-space:pre;transform-origin:0 0;transform:scaleX(0.9417);">A</span>
<span style="position:absolute;left:1219.40px;top:72.02px;font-family:'Liberation Sans', sans-serif;font-size:15.6px;line-height:15.6px;font-weight:400;color:#b4b4b4;white-space:pre;transform-origin:0 0;transform:scaleX(0.9652);">Z</span>
<svg style="position:absolute;left:1232px;top:65px;" width="17" height="17" viewBox="0 0 17 17"><path d="M0.3 0.4H16L9.6 7.6V15.4L6.8 13.6V7.6Z" fill="#b4b4b4"/></svg>
<span style="position:absolute;left:1207.40px;top:94.02px;font-family:'Liberation Sans', sans-serif;font-size:12.4px;line-height:12.4px;font-weight:400;color:#a3a3a3;white-space:pre;transform-origin:0 0;transform:scaleX(0.9273);">Classificar</span>
<span style="position:absolute;left:1210.00px;top:109.02px;font-family:'Liberation Sans', sans-serif;font-size:12.4px;line-height:12.4px;font-weight:400;color:#a3a3a3;white-space:pre;transform-origin:0 0;transform:scaleX(0.9619);">e Filtrar</span>
<svg style="position:absolute;left:1252.4px;top:113.6px;" width="4.6" height="2.8" viewBox="0 0 4.6 2.8"><path d="M0 0H4.6L2.3 2.8Z" fill="#c4c4c4"/></svg>
<svg style="position:absolute;left:1283px;top:60px;" width="26" height="23" viewBox="0 0 26 23"><path d="M5.8 0.6H10V3.6L11.4 6.6V22.4H0.8V11.5L4.2 3.6H5.8Z" fill="#5b5b5b"/><path d="M20.2 0.6H16V3.6L14.6 6.6V22.4H25.2V11.5L21.8 3.6H20.2Z" fill="#5b5b5b"/><rect x="11" y="8" width="4" height="5.4" fill="#5b5b5b"/><path d="M2.6 12.5V21.2M23.4 12.5V21.2" stroke="#fff" stroke-width="0.9"/><path d="M6.6 2.4H9.2M16.8 2.4H19.4" stroke="#fff" stroke-width="0.8"/></svg>
<span style="position:absolute;left:1269.40px;top:94.02px;font-family:'Liberation Sans', sans-serif;font-size:12.4px;line-height:12.4px;font-weight:400;color:#444444;white-space:pre;transform-origin:0 0;transform:scaleX(0.9112);">Localizar e</span>
<span style="position:absolute;left:1265.20px;top:109.02px;font-family:'Liberation Sans', sans-serif;font-size:12.4px;line-height:12.4px;font-weight:400;color:#444444;white-space:pre;transform-origin:0 0;transform:scaleX(0.9187);">Selecionar</span>
<svg style="position:absolute;left:1322px;top:113.6px;" width="4.6" height="2.8" viewBox="0 0 4.6 2.8"><path d="M0 0H4.6L2.3 2.8Z" fill="#5a5a5a"/></svg>
<svg style="position:absolute;left:1347px;top:131px;" width="10" height="7" viewBox="0 0 10 7"><path d="M1 5.8L5 1.6L9 5.8" fill="none" stroke="#5a5a5a" stroke-width="1.8"/></svg>
<div style="position:absolute;left:5px;top:153px;width:103px;height:26px;background:#fff;border:1px solid #c6c6c6;"></div>
<span style="position:absolute;left:12.00px;top:161.02px;font-family:'Liberation Sans', sans-serif;font-size:12.4px;line-height:12.4px;font-weight:400;color:#444;white-space:pre;transform-origin:0 0;transform:scaleX(0.9341);">C9</span>
<svg style="position:absolute;left:93px;top:164px;" width="7" height="4" viewBox="0 0 7 4"><path d="M0 0H7L3.5 4Z" fill="#6a6a6a"/></svg>
<div style="position:absolute;left:121px;top:161.4px;width:2px;height:2px;background:#b0b0b0;"></div>
<div style="position:absolute;left:121px;top:165.4px;width:2px;height:2px;background:#b0b0b0;"></div>
<div style="position:absolute;left:121px;top:169.4px;width:2px;height:2px;background:#b0b0b0;"></div>
<div style="position:absolute;left:137px;top:153px;width:110px;height:26px;background:#fff;border:1px solid #c6c6c6;"></div>
<svg style="position:absolute;left:146px;top:158px;" width="19" height="17" viewBox="0 0 19 17"><path d="M1 1.2L17.5 15.6M17.5 1.2L1 15.6" stroke="#b9b9b9" stroke-width="2.3" fill="none"/></svg>
<svg style="position:absolute;left:182px;top:158px;" width="21" height="17" viewBox="0 0 21 17"><path d="M1 9.4L6.8 15.4L19.4 1.4" stroke="#c4c4c4" stroke-width="3.2" fill="none"/></svg>
<span style="position:absolute;left:220.40px;top:153.02px;font-family:'Liberation Serif', serif;font-size:23px;line-height:23px;font-weight:700;color:#5a5a5a;white-space:pre;transform-origin:0 0;transform:scaleX(1.0000);font-style:italic;">f</span>
<span style="position:absolute;left:228.20px;top:160.02px;font-family:'Liberation Serif', serif;font-size:15px;line-height:15px;font-weight:700;color:#5a5a5a;white-space:pre;transform-origin:0 0;transform:scaleX(1.0500);font-style:italic;">x</span>
<div style="position:absolute;left:250px;top:153px;width:1112px;height:26px;background:#fff;border:1px solid #c6c6c6;border-right:none;"></div>
<span style="position:absolute;left:262.50px;top:161.02px;font-family:'Liberation Sans', sans-serif;font-size:12.6px;line-height:12.6px;font-weight:400;color:#333;white-space:pre;transform-origin:0 0;transform:scaleX(1.0990);">Prismática</span>
<svg style="position:absolute;left:1340px;top:162px;" width="12" height="8" viewBox="0 0 12 8"><path d="M1 1.2L6 6.4L11 1.2" fill="none" stroke="#555" stroke-width="2.2"/></svg>
<div style="position:absolute;left:0px;top:205px;width:1345px;height:1px;background:#ababab;"></div>
<div style="position:absolute;left:1344px;top:205px;width:1px;height:474px;background:#ababab;"></div>
<svg style="position:absolute;left:14px;top:192px;" width="9" height="10" viewBox="0 0 9 10"><path d="M8.5 0.5V9.5H0.5Z" fill="#dddddd"/></svg>
<div style="position:absolute;left:236px;top:189px;width:180px;height:15px;background:#e2e2e2;"></div>
<div style="position:absolute;left:25px;top:189px;width:1px;height:16px;background:#c9c9c9;"></div>
<div style="position:absolute;left:42px;top:189px;width:1px;height:16px;background:#c9c9c9;"></div>
<div style="position:absolute;left:236px;top:189px;width:1px;height:16px;background:#c9c9c9;"></div>
<div style="position:absolute;left:335px;top:189px;width:1px;height:16px;background:#b6b6b6;"></div>
<div style="position:absolute;left:415px;top:189px;width:1px;height:16px;background:#b6b6b6;"></div>
<div style="position:absolute;left:473px;top:189px;width:1px;height:16px;background:#c9c9c9;"></div>
<div style="position:absolute;left:679px;top:189px;width:1px;height:16px;background:#c9c9c9;"></div>
<div style="position:absolute;left:737px;top:189px;width:1px;height:16px;background:#c9c9c9;"></div>
<div style="position:absolute;left:795px;top:189px;width:1px;height:16px;background:#c9c9c9;"></div>
<div style="position:absolute;left:853px;top:189px;width:1px;height:16px;background:#c9c9c9;"></div>
<div style="position:absolute;left:939px;top:189px;width:1px;height:16px;background:#c9c9c9;"></div>
<div style="position:absolute;left:1216px;top:189px;width:1px;height:16px;background:#c9c9c9;"></div>
<div style="position:absolute;left:1296px;top:189px;width:1px;height:16px;background:#c9c9c9;"></div>
<div style="position:absolute;left:236px;top:204px;width:180px;height:2px;background:#217346;"></div>
<span style="position:absolute;left:30.70px;top:191.02px;font-family:'Liberation Sans', sans-serif;font-size:12.4px;line-height:12.4px;font-weight:400;color:#444;white-space:pre;transform-origin:0 0;transform:scaleX(0.9195);">A</span>
<span style="position:absolute;left:136.70px;top:191.02px;font-family:'Liberation Sans', sans-serif;font-size:12.4px;line-height:12.4px;font-weight:400;color:#444;white-space:pre;transform-origin:0 0;transform:scaleX(0.7985);">B</span>
<span style="position:absolute;left:282.70px;top:191.02px;font-family:'Liberation Sans', sans-serif;font-size:12.4px;line-height:12.4px;font-weight:700;color:#217346;white-space:pre;transform-origin:0 0;transform:scaleX(0.8489);">C</span>
<span style="position:absolute;left:371.70px;top:191.02px;font-family:'Liberation Sans', sans-serif;font-size:12.4px;line-height:12.4px;font-weight:700;color:#217346;white-space:pre;transform-origin:0 0;transform:scaleX(0.9606);">D</span>
<span style="position:absolute;left:442.20px;top:191.02px;font-family:'Liberation Sans', sans-serif;font-size:12.4px;line-height:12.4px;font-weight:400;color:#444;white-space:pre;transform-origin:0 0;transform:scaleX(0.6775);">E</span>
<span style="position:absolute;left:574.30px;top:191.02px;font-family:'Liberation Sans', sans-serif;font-size:12.4px;line-height:12.4px;font-weight:400;color:#444;white-space:pre;transform-origin:0 0;transform:scaleX(0.7126);">F</span>
<span style="position:absolute;left:705.00px;top:191.02px;font-family:'Liberation Sans', sans-serif;font-size:12.4px;line-height:12.4px;font-weight:400;color:#444;white-space:pre;transform-origin:0 0;transform:scaleX(0.8298);">G</span>
<span style="position:absolute;left:763.00px;top:191.02px;font-family:'Liberation Sans', sans-serif;font-size:12.4px;line-height:12.4px;font-weight:400;color:#444;white-space:pre;transform-origin:0 0;transform:scaleX(0.8935);">H</span>
<span style="position:absolute;left:823.70px;top:191.02px;font-family:'Liberation Sans', sans-serif;font-size:12.4px;line-height:12.4px;font-weight:400;color:#444;white-space:pre;transform-origin:0 0;transform:scaleX(0.7529);">I</span>
<span style="position:absolute;left:894.90px;top:191.02px;font-family:'Liberation Sans', sans-serif;font-size:12.4px;line-height:12.4px;font-weight:400;color:#444;white-space:pre;transform-origin:0 0;transform:scaleX(0.6771);">J</span>
<span style="position:absolute;left:1075.20px;top:191.02px;font-family:'Liberation Sans', sans-serif;font-size:12.4px;line-height:12.4px;font-weight:400;color:#444;white-space:pre;transform-origin:0 0;transform:scaleX(0.7985);">K</span>
<span style="position:absolute;left:1254.40px;top:191.02px;font-family:'Liberation Sans', sans-serif;font-size:12.4px;line-height:12.4px;font-weight:400;color:#444;white-space:pre;transform-origin:0 0;transform:scaleX(0.7529);">L</span>
<span style="position:absolute;left:1319.80px;top:191.02px;font-family:'Liberation Sans', sans-serif;font-size:12.4px;line-height:12.4px;font-weight:400;color:#444;white-space:pre;transform-origin:0 0;transform:scaleX(1.0070);">M</span>
<div style="position:absolute;left:25px;top:206px;width:1px;height:473px;background:#ababab;"></div>
<div style="position:absolute;left:0px;top:223px;width:25px;height:1px;background:#d8d8d8;"></div>
<span style="position:absolute;left:9.60px;top:209.02px;font-family:'Liberation Sans', sans-serif;font-size:12.4px;line-height:12.4px;font-weight:400;color:#444;white-space:pre;transform-origin:0 0;transform:scaleX(0.8688);">1</span>
<div style="position:absolute;left:0px;top:242px;width:25px;height:1px;background:#d8d8d8;"></div>
<span style="position:absolute;left:9.60px;top:228.02px;font-family:'Liberation Sans', sans-serif;font-size:12.4px;line-height:12.4px;font-weight:400;color:#444;white-space:pre;transform-origin:0 0;transform:scaleX(0.8688);">2</span>
<div style="position:absolute;left:0px;top:261px;width:25px;height:1px;background:#d8d8d8;"></div>
<span style="position:absolute;left:9.60px;top:247.02px;font-family:'Liberation Sans', sans-serif;font-size:12.4px;line-height:12.4px;font-weight:400;color:#444;white-space:pre;transform-origin:0 0;transform:scaleX(0.8688);">3</span>
<div style="position:absolute;left:0px;top:280px;width:25px;height:1px;background:#d8d8d8;"></div>
<span style="position:absolute;left:9.60px;top:266.02px;font-family:'Liberation Sans', sans-serif;font-size:12.4px;line-height:12.4px;font-weight:400;color:#444;white-space:pre;transform-origin:0 0;transform:scaleX(0.8688);">4</span>
<div style="position:absolute;left:0px;top:299px;width:25px;height:1px;background:#d8d8d8;"></div>
<span style="position:absolute;left:9.60px;top:285.02px;font-family:'Liberation Sans', sans-serif;font-size:12.4px;line-height:12.4px;font-weight:400;color:#444;white-space:pre;transform-origin:0 0;transform:scaleX(0.8688);">5</span>
<div style="position:absolute;left:0px;top:326px;width:25px;height:1px;background:#d8d8d8;"></div>
<span style="position:absolute;left:9.60px;top:312.02px;font-family:'Liberation Sans', sans-serif;font-size:12.4px;line-height:12.4px;font-weight:400;color:#444;white-space:pre;transform-origin:0 0;transform:scaleX(0.8688);">6</span>
<div style="position:absolute;left:0px;top:364px;width:25px;height:1px;background:#d8d8d8;"></div>
<span style="position:absolute;left:9.60px;top:350.02px;font-family:'Liberation Sans', sans-serif;font-size:12.4px;line-height:12.4px;font-weight:400;color:#444;white-space:pre;transform-origin:0 0;transform:scaleX(0.8688);">7</span>
<div style="position:absolute;left:0px;top:383px;width:25px;height:1px;background:#d8d8d8;"></div>
<span style="position:absolute;left:9.60px;top:369.02px;font-family:'Liberation Sans', sans-serif;font-size:12.4px;line-height:12.4px;font-weight:400;color:#444;white-space:pre;transform-origin:0 0;transform:scaleX(0.8688);">8</span>
<div style="position:absolute;left:0px;top:402px;width:25px;height:1px;background:#d8d8d8;"></div>
<div style="position:absolute;left:0px;top:383px;width:24px;height:20px;background:#e2e2e2;"></div>
<div style="position:absolute;left:24px;top:383px;width:2px;height:20px;background:#217346;"></div>
<span style="position:absolute;left:9.25px;top:388.02px;font-family:'Liberation Sans', sans-serif;font-size:12.4px;line-height:12.4px;font-weight:700;color:#217346;white-space:pre;transform-origin:0 0;transform:scaleX(0.9701);">9</span>
<div style="position:absolute;left:0px;top:421px;width:25px;height:1px;background:#d8d8d8;"></div>
<span style="position:absolute;left:6.80px;top:407.02px;font-family:'Liberation Sans', sans-serif;font-size:12.4px;line-height:12.4px;font-weight:400;color:#444;white-space:pre;transform-origin:0 0;transform:scaleX(0.8408);">10</span>
<div style="position:absolute;left:0px;top:440px;width:25px;height:1px;background:#d8d8d8;"></div>
<span style="position:absolute;left:6.80px;top:426.02px;font-family:'Liberation Sans', sans-serif;font-size:12.4px;line-height:12.4px;font-weight:400;color:#444;white-space:pre;transform-origin:0 0;transform:scaleX(0.9010);">11</span>
<div style="position:absolute;left:0px;top:459px;width:25px;height:1px;background:#d8d8d8;"></div>
<span style="position:absolute;left:6.80px;top:445.02px;font-family:'Liberation Sans', sans-serif;font-size:12.4px;line-height:12.4px;font-weight:400;color:#444;white-space:pre;transform-origin:0 0;transform:scaleX(0.8408);">12</span>
<div style="position:absolute;left:0px;top:478px;width:25px;height:1px;background:#d8d8d8;"></div>
<span style="position:absolute;left:6.80px;top:464.02px;font-family:'Liberation Sans', sans-serif;font-size:12.4px;line-height:12.4px;font-weight:400;color:#444;white-space:pre;transform-origin:0 0;transform:scaleX(0.8408);">13</span>
<div style="position:absolute;left:0px;top:497px;width:25px;height:1px;background:#d8d8d8;"></div>
<span style="position:absolute;left:6.80px;top:483.02px;font-family:'Liberation Sans', sans-serif;font-size:12.4px;line-height:12.4px;font-weight:400;color:#444;white-space:pre;transform-origin:0 0;transform:scaleX(0.8408);">14</span>
<div style="position:absolute;left:0px;top:516px;width:25px;height:1px;background:#d8d8d8;"></div>
<span style="position:absolute;left:6.80px;top:502.02px;font-family:'Liberation Sans', sans-serif;font-size:12.4px;line-height:12.4px;font-weight:400;color:#444;white-space:pre;transform-origin:0 0;transform:scaleX(0.8408);">15</span>
<div style="position:absolute;left:0px;top:535px;width:25px;height:1px;background:#d8d8d8;"></div>
<span style="position:absolute;left:6.80px;top:521.02px;font-family:'Liberation Sans', sans-serif;font-size:12.4px;line-height:12.4px;font-weight:400;color:#444;white-space:pre;transform-origin:0 0;transform:scaleX(0.8408);">16</span>
<div style="position:absolute;left:0px;top:554px;width:25px;height:1px;background:#d8d8d8;"></div>
<span style="position:absolute;left:6.80px;top:540.02px;font-family:'Liberation Sans', sans-serif;font-size:12.4px;line-height:12.4px;font-weight:400;color:#444;white-space:pre;transform-origin:0 0;transform:scaleX(0.8408);">17</span>
<div style="position:absolute;left:0px;top:573px;width:25px;height:1px;background:#d8d8d8;"></div>
<span style="position:absolute;left:6.80px;top:559.02px;font-family:'Liberation Sans', sans-serif;font-size:12.4px;line-height:12.4px;font-weight:400;color:#444;white-space:pre;transform-origin:0 0;transform:scaleX(0.8408);">18</span>
<div style="position:absolute;left:0px;top:592px;width:25px;height:1px;background:#d8d8d8;"></div>
<span style="position:absolute;left:6.80px;top:578.02px;font-family:'Liberation Sans', sans-serif;font-size:12.4px;line-height:12.4px;font-weight:400;color:#444;white-space:pre;transform-origin:0 0;transform:scaleX(0.8408);">19</span>
<div style="position:absolute;left:0px;top:611px;width:25px;height:1px;background:#d8d8d8;"></div>
<span style="position:absolute;left:6.80px;top:597.02px;font-family:'Liberation Sans', sans-serif;font-size:12.4px;line-height:12.4px;font-weight:400;color:#444;white-space:pre;transform-origin:0 0;transform:scaleX(0.8408);">20</span>
<div style="position:absolute;left:0px;top:630px;width:25px;height:1px;background:#d8d8d8;"></div>
<span style="position:absolute;left:6.80px;top:616.02px;font-family:'Liberation Sans', sans-serif;font-size:12.4px;line-height:12.4px;font-weight:400;color:#444;white-space:pre;transform-origin:0 0;transform:scaleX(0.8408);">21</span>
<div style="position:absolute;left:0px;top:649px;width:25px;height:1px;background:#d8d8d8;"></div>
<span style="position:absolute;left:6.80px;top:635.02px;font-family:'Liberation Sans', sans-serif;font-size:12.4px;line-height:12.4px;font-weight:400;color:#444;white-space:pre;transform-origin:0 0;transform:scaleX(0.8408);">22</span>
<div style="position:absolute;left:0px;top:668px;width:25px;height:1px;background:#d8d8d8;"></div>
<span style="position:absolute;left:6.80px;top:654.02px;font-family:'Liberation Sans', sans-serif;font-size:12.4px;line-height:12.4px;font-weight:400;color:#444;white-space:pre;transform-origin:0 0;transform:scaleX(0.8408);">23</span>
<div style="position:absolute;left:0;top:669px;width:25px;height:10px;overflow:hidden;"><span style="position:absolute;left:6.4px;top:3px;font-size:11.8px;line-height:12px;color:#444;transform:scaleX(0.92);transform-origin:0 0;">24</span></div>
<div style="position:absolute;left:1346px;top:189px;width:20px;height:490px;background:#fff;"></div>
<div style="position:absolute;left:1348px;top:206px;width:15px;height:458px;background:#f3f3f3;"></div>
<div style="position:absolute;left:1348px;top:191px;width:15px;height:15px;background:#fff;border:1px solid #ababab;"></div>
<svg style="position:absolute;left:1352px;top:196px;" width="7" height="4" viewBox="0 0 7 4"><path d="M0 4H7L3.5 0Z" fill="#6a6a6a"/></svg>
<div style="position:absolute;left:1348px;top:206px;width:15px;height:30px;background:#fff;border:1px solid #ababab;"></div>
<div style="position:absolute;left:1348px;top:664px;width:15px;height:15px;background:#fff;border:1px solid #ababab;"></div>
<svg style="position:absolute;left:1352px;top:670px;" width="7" height="4" viewBox="0 0 7 4"><path d="M0 0H7L3.5 4Z" fill="#6a6a6a"/></svg>
<div style="position:absolute;left:43px;top:223px;width:372px;height:76px;background:#5b9bd5;border:1px solid #41719c;border-radius:13px;"></div>
<span style="position:absolute;left:91.20px;top:248.02px;font-family:'Liberation Sans', sans-serif;font-size:26.3px;line-height:26.3px;font-weight:700;color:#fff;white-space:pre;transform-origin:0 0;transform:scaleX(1.0077);">IMPRIMIR MEMORIAL</span>
<div style="position:absolute;left:41px;top:325px;width:375px;height:344px;background:#000;"></div>
<div style="position:absolute;left:43px;top:327px;width:371px;height:36px;background:#5b9bd5;"></div>
<span style="position:absolute;left:163.40px;top:338.02px;font-family:'Liberation Sans', sans-serif;font-size:15px;line-height:15px;font-weight:700;color:#000;white-space:pre;transform-origin:0 0;transform:scaleX(1.0424);">Entrada de dados</span>
<div style="position:absolute;left:43px;top:365px;width:371px;height:17px;background:#bdd7ee;"></div>
<span style="position:absolute;left:189.95px;top:367.02px;font-family:'Liberation Sans', sans-serif;font-size:13.1px;line-height:13.1px;font-weight:700;color:#000;white-space:pre;transform-origin:0 0;transform:scaleX(0.8948);">Fossa séptica</span>
<svg style="position:absolute;left:409px;top:365px;" width="5" height="5" viewBox="0 0 5 5"><path d="M0 0H5V5Z" fill="#ff0000"/></svg>
<div style="position:absolute;left:43px;top:384px;width:193px;height:18px;background:#f2f2f2;"></div>
<div style="position:absolute;left:237px;top:384px;width:177px;height:18px;background:#fff;"></div>
<svg style="position:absolute;left:231px;top:384px;" width="5" height="5" viewBox="0 0 5 5"><path d="M0 0H5V5Z" fill="#ff0000"/></svg>
<div style="position:absolute;left:43px;top:403px;width:193px;height:18px;background:#f2f2f2;"></div>
<div style="position:absolute;left:237px;top:403px;width:177px;height:18px;background:#fff;"></div>
<svg style="position:absolute;left:231px;top:403px;" width="5" height="5" viewBox="0 0 5 5"><path d="M0 0H5V5Z" fill="#ff0000"/></svg>
<div style="position:absolute;left:43px;top:422px;width:193px;height:18px;background:#f2f2f2;"></div>
<div style="position:absolute;left:237px;top:422px;width:177px;height:18px;background:#fff;"></div>
<svg style="position:absolute;left:231px;top:422px;" width="5" height="5" viewBox="0 0 5 5"><path d="M0 0H5V5Z" fill="#ff0000"/></svg>
<div style="position:absolute;left:43px;top:441px;width:193px;height:18px;background:#f2f2f2;"></div>
<div style="position:absolute;left:237px;top:441px;width:177px;height:18px;background:#fff;"></div>
<svg style="position:absolute;left:231px;top:441px;" width="5" height="5" viewBox="0 0 5 5"><path d="M0 0H5V5Z" fill="#ff0000"/></svg>
<div style="position:absolute;left:43px;top:460px;width:193px;height:18px;background:#f2f2f2;"></div>
<div style="position:absolute;left:237px;top:460px;width:177px;height:18px;background:#fff;"></div>
<svg style="position:absolute;left:231px;top:460px;" width="5" height="5" viewBox="0 0 5 5"><path d="M0 0H5V5Z" fill="#ff0000"/></svg>
<div style="position:absolute;left:43px;top:479px;width:193px;height:18px;background:#f2f2f2;"></div>
<div style="position:absolute;left:237px;top:479px;width:177px;height:18px;background:#fff;"></div>
<svg style="position:absolute;left:231px;top:479px;" width="5" height="5" viewBox="0 0 5 5"><path d="M0 0H5V5Z" fill="#ff0000"/></svg>
<div style="position:absolute;left:43px;top:498px;width:193px;height:18px;background:#f2f2f2;"></div>
<div style="position:absolute;left:237px;top:498px;width:177px;height:18px;background:#fff;"></div>
<svg style="position:absolute;left:231px;top:498px;" width="5" height="5" viewBox="0 0 5 5"><path d="M0 0H5V5Z" fill="#ff0000"/></svg>
<div style="position:absolute;left:43px;top:517px;width:193px;height:17px;background:#f2f2f2;"></div>
<div style="position:absolute;left:237px;top:517px;width:177px;height:17px;background:#fff;"></div>
<svg style="position:absolute;left:231px;top:517px;" width="5" height="5" viewBox="0 0 5 5"><path d="M0 0H5V5Z" fill="#ff0000"/></svg>
<div style="position:absolute;left:43px;top:536px;width:371px;height:17px;background:#bdd7ee;"></div>
<span style="position:absolute;left:181.95px;top:538.02px;font-family:'Liberation Sans', sans-serif;font-size:13.1px;line-height:13.1px;font-weight:700;color:#000;white-space:pre;transform-origin:0 0;transform:scaleX(0.9429);">Filtro anaeróbio</span>
<div style="position:absolute;left:43px;top:555px;width:193px;height:18px;background:#f2f2f2;"></div>
<div style="position:absolute;left:237px;top:555px;width:98px;height:18px;background:#fff;"></div>
<div style="position:absolute;left:336px;top:555px;width:78px;height:18px;background:#f2f2f2;"></div>
<svg style="position:absolute;left:231px;top:555px;" width="5" height="5" viewBox="0 0 5 5"><path d="M0 0H5V5Z" fill="#ff0000"/></svg>
<div style="position:absolute;left:43px;top:574px;width:193px;height:17px;background:#f2f2f2;"></div>
<div style="position:absolute;left:237px;top:574px;width:98px;height:17px;background:#fff;"></div>
<div style="position:absolute;left:336px;top:574px;width:78px;height:17px;background:#f2f2f2;"></div>
<svg style="position:absolute;left:231px;top:574px;" width="5" height="5" viewBox="0 0 5 5"><path d="M0 0H5V5Z" fill="#ff0000"/></svg>
<div style="position:absolute;left:43px;top:593px;width:371px;height:17px;background:#bdd7ee;"></div>
<span style="position:absolute;left:195.90px;top:595.02px;font-family:'Liberation Sans', sans-serif;font-size:13.1px;line-height:13.1px;font-weight:700;color:#000;white-space:pre;transform-origin:0 0;transform:scaleX(0.9463);">Sumidouro</span>
<svg style="position:absolute;left:409px;top:593px;" width="5" height="5" viewBox="0 0 5 5"><path d="M0 0H5V5Z" fill="#ff0000"/></svg>
<div style="position:absolute;left:43px;top:612px;width:193px;height:18px;background:#f2f2f2;"></div>
<div style="position:absolute;left:237px;top:612px;width:98px;height:18px;background:#fff;"></div>
<div style="position:absolute;left:336px;top:612px;width:78px;height:18px;background:#f2f2f2;"></div>
<svg style="position:absolute;left:231px;top:612px;" width="5" height="5" viewBox="0 0 5 5"><path d="M0 0H5V5Z" fill="#ff0000"/></svg>
<div style="position:absolute;left:43px;top:631px;width:193px;height:18px;background:#f2f2f2;"></div>
<div style="position:absolute;left:237px;top:631px;width:98px;height:18px;background:#fff;"></div>
<div style="position:absolute;left:336px;top:631px;width:78px;height:18px;background:#f2f2f2;"></div>
<svg style="position:absolute;left:231px;top:631px;" width="5" height="5" viewBox="0 0 5 5"><path d="M0 0H5V5Z" fill="#ff0000"/></svg>
<div style="position:absolute;left:43px;top:650px;width:193px;height:17px;background:#f2f2f2;"></div>
<div style="position:absolute;left:237px;top:650px;width:98px;height:17px;background:#fff;"></div>
<div style="position:absolute;left:336px;top:650px;width:78px;height:17px;background:#f2f2f2;"></div>
<svg style="position:absolute;left:231px;top:650px;" width="5" height="5" viewBox="0 0 5 5"><path d="M0 0H5V5Z" fill="#ff0000"/></svg>
<span style="position:absolute;left:45.30px;top:389.02px;font-family:'Liberation Sans', sans-serif;font-size:11.8px;line-height:11.8px;font-weight:400;color:#000;white-space:pre;transform-origin:0 0;transform:scaleX(1.0186);">Tipo de fossa</span>
<span style="position:absolute;left:45.30px;top:408.02px;font-family:'Liberation Sans', sans-serif;font-size:11.8px;line-height:11.8px;font-weight:400;color:#000;white-space:pre;transform-origin:0 0;transform:scaleX(1.0430);">Tipo de edifício</span>
<span style="position:absolute;left:45.30px;top:427.02px;font-family:'Liberation Sans', sans-serif;font-size:11.8px;line-height:11.8px;font-weight:400;color:#000;white-space:pre;transform-origin:0 0;transform:scaleX(0.9941);">Nº de pessoas</span>
<span style="position:absolute;left:45.30px;top:446.02px;font-family:'Liberation Sans', sans-serif;font-size:11.8px;line-height:11.8px;font-weight:400;color:#000;white-space:pre;transform-origin:0 0;transform:scaleX(1.0539);">Intervalo entre limpezas</span>
<span style="position:absolute;left:45.30px;top:465.02px;font-family:'Liberation Sans', sans-serif;font-size:11.8px;line-height:11.8px;font-weight:400;color:#000;white-space:pre;transform-origin:0 0;transform:scaleX(1.0420);">Temperatura ambiente</span>
<span style="position:absolute;left:45.30px;top:484.02px;font-family:'Liberation Sans', sans-serif;font-size:11.8px;line-height:11.8px;font-weight:400;color:#000;white-space:pre;transform-origin:0 0;transform:scaleX(1.0324);">Comprimento interno (L)</span>
<span style="position:absolute;left:45.30px;top:503.02px;font-family:'Liberation Sans', sans-serif;font-size:11.8px;line-height:11.8px;font-weight:400;color:#000;white-space:pre;transform-origin:0 0;transform:scaleX(1.0412);">Largura interna (W)</span>
<span style="position:absolute;left:45.30px;top:617.02px;font-family:'Liberation Sans', sans-serif;font-size:11.8px;line-height:11.8px;font-weight:400;color:#000;white-space:pre;transform-origin:0 0;transform:scaleX(1.0419);">Taxa de percolação</span>
<span style="position:absolute;left:45.30px;top:521.02px;font-family:'Liberation Sans', sans-serif;font-size:11.8px;line-height:11.8px;font-weight:400;color:#000;white-space:pre;transform-origin:0 0;transform:scaleX(1.1119);">Altura útil (h</span>
<span style="position:absolute;left:115.70px;top:522.02px;font-family:'Liberation Sans', sans-serif;font-size:10.2px;line-height:10.2px;font-weight:400;color:#000;white-space:pre;transform-origin:0 0;transform:scaleX(0.8815);">u</span>
<span style="position:absolute;left:121.60px;top:521.02px;font-family:'Liberation Sans', sans-serif;font-size:11.8px;line-height:11.8px;font-weight:400;color:#000;white-space:pre;transform-origin:0 0;transform:scaleX(0.7619);">)</span>
<span style="position:absolute;left:45.30px;top:578.02px;font-family:'Liberation Sans', sans-serif;font-size:11.8px;line-height:11.8px;font-weight:400;color:#000;white-space:pre;transform-origin:0 0;transform:scaleX(1.1119);">Altura útil (h</span>
<span style="position:absolute;left:115.70px;top:579.02px;font-family:'Liberation Sans', sans-serif;font-size:10.2px;line-height:10.2px;font-weight:400;color:#000;white-space:pre;transform-origin:0 0;transform:scaleX(0.8815);">u</span>
<span style="position:absolute;left:121.60px;top:578.02px;font-family:'Liberation Sans', sans-serif;font-size:11.8px;line-height:11.8px;font-weight:400;color:#000;white-space:pre;transform-origin:0 0;transform:scaleX(0.7619);">)</span>
<span style="position:absolute;left:45.30px;top:654.02px;font-family:'Liberation Sans', sans-serif;font-size:11.8px;line-height:11.8px;font-weight:400;color:#000;white-space:pre;transform-origin:0 0;transform:scaleX(1.1119);">Altura útil (h</span>
<span style="position:absolute;left:115.70px;top:655.02px;font-family:'Liberation Sans', sans-serif;font-size:10.2px;line-height:10.2px;font-weight:400;color:#000;white-space:pre;transform-origin:0 0;transform:scaleX(0.8815);">u</span>
<span style="position:absolute;left:121.60px;top:654.02px;font-family:'Liberation Sans', sans-serif;font-size:11.8px;line-height:11.8px;font-weight:400;color:#000;white-space:pre;transform-origin:0 0;transform:scaleX(0.7619);">)</span>
<span style="position:absolute;left:45.30px;top:560.02px;font-family:'Liberation Sans', sans-serif;font-size:11.8px;line-height:11.8px;font-weight:400;color:#000;white-space:pre;transform-origin:0 0;transform:scaleX(1.0482);">Diâmetro interno (D</span>
<span style="position:absolute;left:154.00px;top:561.02px;font-family:'Liberation Sans', sans-serif;font-size:10.2px;line-height:10.2px;font-weight:400;color:#000;white-space:pre;transform-origin:0 0;transform:scaleX(0.7062);">i</span>
<span style="position:absolute;left:157.20px;top:560.02px;font-family:'Liberation Sans', sans-serif;font-size:11.8px;line-height:11.8px;font-weight:400;color:#000;white-space:pre;transform-origin:0 0;transform:scaleX(0.8127);">)</span>
<span style="position:absolute;left:45.30px;top:636.02px;font-family:'Liberation Sans', sans-serif;font-size:11.8px;line-height:11.8px;font-weight:400;color:#000;white-space:pre;transform-origin:0 0;transform:scaleX(1.0482);">Diâmetro interno (D</span>
<span style="position:absolute;left:154.00px;top:637.02px;font-family:'Liberation Sans', sans-serif;font-size:10.2px;line-height:10.2px;font-weight:400;color:#000;white-space:pre;transform-origin:0 0;transform:scaleX(0.7062);">i</span>
<span style="position:absolute;left:157.20px;top:636.02px;font-family:'Liberation Sans', sans-serif;font-size:11.8px;line-height:11.8px;font-weight:400;color:#000;white-space:pre;transform-origin:0 0;transform:scaleX(0.8127);">)</span>
<span style="position:absolute;left:296.50px;top:389.02px;font-family:'Liberation Sans', sans-serif;font-size:11.8px;line-height:11.8px;font-weight:400;color:#000;white-space:pre;transform-origin:0 0;transform:scaleX(1.0715);">Prismática</span>
<span style="position:absolute;left:262.40px;top:408.02px;font-family:'Liberation Sans', sans-serif;font-size:11.8px;line-height:11.8px;font-weight:400;color:#000;white-space:pre;transform-origin:0 0;transform:scaleX(1.0541);">Residência padrão alto</span>
<span style="position:absolute;left:322.90px;top:427.02px;font-family:'Liberation Sans', sans-serif;font-size:11.8px;line-height:11.8px;font-weight:400;color:#000;white-space:pre;transform-origin:0 0;transform:scaleX(0.9448);">7</span>
<span style="position:absolute;left:309.80px;top:578.02px;font-family:'Liberation Sans', sans-serif;font-size:11.8px;line-height:11.8px;font-weight:400;color:#000;white-space:pre;transform-origin:0 0;transform:scaleX(1.0275);">1,20</span>
<span style="position:absolute;left:319.80px;top:617.02px;font-family:'Liberation Sans', sans-serif;font-size:11.8px;line-height:11.8px;font-weight:400;color:#000;white-space:pre;transform-origin:0 0;transform:scaleX(1.0362);">80</span>
<span style="position:absolute;left:309.80px;top:636.02px;font-family:'Liberation Sans', sans-serif;font-size:11.8px;line-height:11.8px;font-weight:400;color:#000;white-space:pre;transform-origin:0 0;transform:scaleX(1.0275);">1,00</span>
<span style="position:absolute;left:309.80px;top:654.02px;font-family:'Liberation Sans', sans-serif;font-size:11.8px;line-height:11.8px;font-weight:400;color:#000;white-space:pre;transform-origin:0 0;transform:scaleX(1.0275);">2,30</span>
<span style="position:absolute;left:337.60px;top:578.02px;font-family:'Liberation Sans', sans-serif;font-size:11.8px;line-height:11.8px;font-weight:400;color:#000;white-space:pre;transform-origin:0 0;transform:scaleX(0.9971);">m</span>
<span style="position:absolute;left:337.60px;top:617.02px;font-family:'Liberation Sans', sans-serif;font-size:11.8px;line-height:11.8px;font-weight:400;color:#000;white-space:pre;transform-origin:0 0;transform:scaleX(1.1144);">min/m</span>
<span style="position:absolute;left:337.60px;top:636.02px;font-family:'Liberation Sans', sans-serif;font-size:11.8px;line-height:11.8px;font-weight:400;color:#000;white-space:pre;transform-origin:0 0;transform:scaleX(0.9971);">m</span>
<span style="position:absolute;left:337.60px;top:654.02px;font-family:'Liberation Sans', sans-serif;font-size:11.8px;line-height:11.8px;font-weight:400;color:#000;white-space:pre;transform-origin:0 0;transform:scaleX(0.9971);">m</span>
<div style="position:absolute;left:235px;top:382px;width:182px;height:22px;background:transparent;border:2px solid #217346;"></div>
<div style="position:absolute;left:414px;top:384px;width:1px;height:18px;background:#fff;"></div>
<div style="position:absolute;left:412px;top:399px;width:6px;height:6px;background:#fff;"></div>
<div style="position:absolute;left:413px;top:400px;width:5px;height:5px;background:#217346;"></div>
<div style="position:absolute;left:416px;top:384px;width:17px;height:17px;background:linear-gradient(#fff,#f1f3f6);border:1px solid #a6adb8;"></div>
<svg style="position:absolute;left:421px;top:391px;" width="7" height="4" viewBox="0 0 7 4"><path d="M0 0H7L3.5 4Z" fill="#606060"/></svg>
<div style="position:absolute;left:472px;top:458px;width:324px;height:211px;background:#000;"></div>
<div style="position:absolute;left:474px;top:460px;width:320px;height:36px;background:#5b9bd5;"></div>
<span style="position:absolute;left:578.00px;top:471.02px;font-family:'Liberation Sans', sans-serif;font-size:15px;line-height:15px;font-weight:700;color:#000;white-space:pre;transform-origin:0 0;transform:scaleX(1.0305);">Saída de dados</span>
<div style="position:absolute;left:474px;top:498px;width:320px;height:17px;background:#bdd7ee;"></div>
<span style="position:absolute;left:596.05px;top:500.02px;font-family:'Liberation Sans', sans-serif;font-size:13.1px;line-height:13.1px;font-weight:700;color:#000;white-space:pre;transform-origin:0 0;transform:scaleX(0.8948);">Fossa séptica</span>
<div style="position:absolute;left:474px;top:517px;width:205px;height:18px;background:#f2f2f2;"></div>
<div style="position:absolute;left:680px;top:517px;width:57px;height:18px;background:#fff;"></div>
<div style="position:absolute;left:738px;top:517px;width:56px;height:18px;background:#f2f2f2;"></div>
<svg style="position:absolute;left:674px;top:517px;" width="5" height="5" viewBox="0 0 5 5"><path d="M0 0H5V5Z" fill="#ff0000"/></svg>
<div style="position:absolute;left:474px;top:536px;width:205px;height:17px;background:#f2f2f2;"></div>
<div style="position:absolute;left:680px;top:536px;width:57px;height:17px;background:#fff;"></div>
<div style="position:absolute;left:738px;top:536px;width:56px;height:17px;background:#f2f2f2;"></div>
<svg style="position:absolute;left:674px;top:536px;" width="5" height="5" viewBox="0 0 5 5"><path d="M0 0H5V5Z" fill="#ff0000"/></svg>
<div style="position:absolute;left:474px;top:555px;width:320px;height:17px;background:#bdd7ee;"></div>
<span style="position:absolute;left:588.05px;top:557.02px;font-family:'Liberation Sans', sans-serif;font-size:13.1px;line-height:13.1px;font-weight:700;color:#000;white-space:pre;transform-origin:0 0;transform:scaleX(0.9429);">Filtro anaeróbio</span>
<div style="position:absolute;left:474px;top:574px;width:205px;height:18px;background:#f2f2f2;"></div>
<div style="position:absolute;left:680px;top:574px;width:57px;height:18px;background:#fff;"></div>
<div style="position:absolute;left:738px;top:574px;width:56px;height:18px;background:#f2f2f2;"></div>
<svg style="position:absolute;left:674px;top:574px;" width="5" height="5" viewBox="0 0 5 5"><path d="M0 0H5V5Z" fill="#ff0000"/></svg>
<div style="position:absolute;left:474px;top:593px;width:205px;height:17px;background:#f2f2f2;"></div>
<div style="position:absolute;left:680px;top:593px;width:57px;height:17px;background:#fff;"></div>
<div style="position:absolute;left:738px;top:593px;width:56px;height:17px;background:#f2f2f2;"></div>
<svg style="position:absolute;left:674px;top:593px;" width="5" height="5" viewBox="0 0 5 5"><path d="M0 0H5V5Z" fill="#ff0000"/></svg>
<div style="position:absolute;left:474px;top:612px;width:320px;height:17px;background:#bdd7ee;"></div>
<span style="position:absolute;left:602.00px;top:614.02px;font-family:'Liberation Sans', sans-serif;font-size:13.1px;line-height:13.1px;font-weight:700;color:#000;white-space:pre;transform-origin:0 0;transform:scaleX(0.9463);">Sumidouro</span>
<div style="position:absolute;left:474px;top:631px;width:205px;height:18px;background:#f2f2f2;"></div>
<div style="position:absolute;left:680px;top:631px;width:57px;height:18px;background:#fff;"></div>
<div style="position:absolute;left:738px;top:631px;width:56px;height:18px;background:#f2f2f2;"></div>
<svg style="position:absolute;left:674px;top:631px;" width="5" height="5" viewBox="0 0 5 5"><path d="M0 0H5V5Z" fill="#ff0000"/></svg>
<div style="position:absolute;left:474px;top:650px;width:205px;height:17px;background:#f2f2f2;"></div>
<div style="position:absolute;left:680px;top:650px;width:57px;height:17px;background:#fff;"></div>
<div style="position:absolute;left:738px;top:650px;width:56px;height:17px;background:#f2f2f2;"></div>
<svg style="position:absolute;left:674px;top:650px;" width="5" height="5" viewBox="0 0 5 5"><path d="M0 0H5V5Z" fill="#ff0000"/></svg>
<span style="position:absolute;left:476.20px;top:522.02px;font-family:'Liberation Sans', sans-serif;font-size:11.8px;line-height:11.8px;font-weight:400;color:#000;white-space:pre;transform-origin:0 0;transform:scaleX(1.0631);">Volume útil necessário</span>
<span style="position:absolute;left:711.40px;top:522.02px;font-family:'Liberation Sans', sans-serif;font-size:11.8px;line-height:11.8px;font-weight:400;color:#000;white-space:pre;transform-origin:0 0;transform:scaleX(1.0188);">3,70</span>
<span style="position:absolute;left:740.40px;top:522.02px;font-family:'Liberation Sans', sans-serif;font-size:11.8px;line-height:11.8px;font-weight:400;color:#000;white-space:pre;transform-origin:0 0;transform:scaleX(0.9564);">m</span>
<span style="position:absolute;left:750.50px;top:521.02px;font-family:'Liberation Sans', sans-serif;font-size:7.8px;line-height:7.8px;font-weight:700;color:#000;white-space:pre;transform-origin:0 0;transform:scaleX(0.8518);">3</span>
<span style="position:absolute;left:476.20px;top:540.02px;font-family:'Liberation Sans', sans-serif;font-size:11.8px;line-height:11.8px;font-weight:400;color:#000;white-space:pre;transform-origin:0 0;transform:scaleX(1.0758);">Volume útil adotado</span>
<span style="position:absolute;left:711.40px;top:540.02px;font-family:'Liberation Sans', sans-serif;font-size:11.8px;line-height:11.8px;font-weight:400;color:#000;white-space:pre;transform-origin:0 0;transform:scaleX(1.0188);">3,75</span>
<span style="position:absolute;left:740.40px;top:540.02px;font-family:'Liberation Sans', sans-serif;font-size:11.8px;line-height:11.8px;font-weight:400;color:#000;white-space:pre;transform-origin:0 0;transform:scaleX(0.9564);">m</span>
<span style="position:absolute;left:750.50px;top:539.02px;font-family:'Liberation Sans', sans-serif;font-size:7.8px;line-height:7.8px;font-weight:700;color:#000;white-space:pre;transform-origin:0 0;transform:scaleX(0.8518);">3</span>
<span style="position:absolute;left:476.20px;top:579.02px;font-family:'Liberation Sans', sans-serif;font-size:11.8px;line-height:11.8px;font-weight:400;color:#000;white-space:pre;transform-origin:0 0;transform:scaleX(1.0631);">Volume útil necessário</span>
<span style="position:absolute;left:711.40px;top:579.02px;font-family:'Liberation Sans', sans-serif;font-size:11.8px;line-height:11.8px;font-weight:400;color:#000;white-space:pre;transform-origin:0 0;transform:scaleX(1.0188);">1,79</span>
<span style="position:absolute;left:740.40px;top:579.02px;font-family:'Liberation Sans', sans-serif;font-size:11.8px;line-height:11.8px;font-weight:400;color:#000;white-space:pre;transform-origin:0 0;transform:scaleX(0.9564);">m</span>
<span style="position:absolute;left:750.50px;top:578.02px;font-family:'Liberation Sans', sans-serif;font-size:7.8px;line-height:7.8px;font-weight:700;color:#000;white-space:pre;transform-origin:0 0;transform:scaleX(0.8518);">3</span>
<span style="position:absolute;left:476.20px;top:597.02px;font-family:'Liberation Sans', sans-serif;font-size:11.8px;line-height:11.8px;font-weight:400;color:#000;white-space:pre;transform-origin:0 0;transform:scaleX(1.0758);">Volume útil adotado</span>
<span style="position:absolute;left:711.40px;top:597.02px;font-family:'Liberation Sans', sans-serif;font-size:11.8px;line-height:11.8px;font-weight:400;color:#000;white-space:pre;transform-origin:0 0;transform:scaleX(1.0188);">2,12</span>
<span style="position:absolute;left:740.40px;top:597.02px;font-family:'Liberation Sans', sans-serif;font-size:11.8px;line-height:11.8px;font-weight:400;color:#000;white-space:pre;transform-origin:0 0;transform:scaleX(0.9564);">m</span>
<span style="position:absolute;left:750.50px;top:596.02px;font-family:'Liberation Sans', sans-serif;font-size:7.8px;line-height:7.8px;font-weight:700;color:#000;white-space:pre;transform-origin:0 0;transform:scaleX(0.8518);">3</span>
<span style="position:absolute;left:476.20px;top:636.02px;font-family:'Liberation Sans', sans-serif;font-size:11.8px;line-height:11.8px;font-weight:400;color:#000;white-space:pre;transform-origin:0 0;transform:scaleX(1.0616);">Área de infiltração necessária</span>
<span style="position:absolute;left:711.40px;top:636.02px;font-family:'Liberation Sans', sans-serif;font-size:11.8px;line-height:11.8px;font-weight:400;color:#000;white-space:pre;transform-origin:0 0;transform:scaleX(1.0188);">7,79</span>
<span style="position:absolute;left:740.40px;top:636.02px;font-family:'Liberation Sans', sans-serif;font-size:11.8px;line-height:11.8px;font-weight:400;color:#000;white-space:pre;transform-origin:0 0;transform:scaleX(0.9564);">m</span>
<span style="position:absolute;left:750.50px;top:635.02px;font-family:'Liberation Sans', sans-serif;font-size:7.8px;line-height:7.8px;font-weight:700;color:#000;white-space:pre;transform-origin:0 0;transform:scaleX(0.8518);">2</span>
<span style="position:absolute;left:476.20px;top:654.02px;font-family:'Liberation Sans', sans-serif;font-size:11.8px;line-height:11.8px;font-weight:400;color:#000;white-space:pre;transform-origin:0 0;transform:scaleX(1.0722);">Área de infiltração adotada</span>
<span style="position:absolute;left:711.40px;top:654.02px;font-family:'Liberation Sans', sans-serif;font-size:11.8px;line-height:11.8px;font-weight:400;color:#000;white-space:pre;transform-origin:0 0;transform:scaleX(1.0188);">8,01</span>
<span style="position:absolute;left:740.40px;top:654.02px;font-family:'Liberation Sans', sans-serif;font-size:11.8px;line-height:11.8px;font-weight:400;color:#000;white-space:pre;transform-origin:0 0;transform:scaleX(0.9564);">m</span>
<span style="position:absolute;left:750.50px;top:653.02px;font-family:'Liberation Sans', sans-serif;font-size:7.8px;line-height:7.8px;font-weight:700;color:#000;white-space:pre;transform-origin:0 0;transform:scaleX(0.8518);">2</span>
<div style="position:absolute;left:852px;top:458px;width:445px;height:211px;background:#000;"></div>
<div style="position:absolute;left:854px;top:460px;width:441px;height:36px;background:#5b9bd5;"></div>
<span style="position:absolute;left:1031.30px;top:471.02px;font-family:'Liberation Sans', sans-serif;font-size:15px;line-height:15px;font-weight:700;color:#000;white-space:pre;transform-origin:0 0;transform:scaleX(1.0164);">Verificações</span>
<div style="position:absolute;left:854px;top:498px;width:84px;height:74px;background:#bdd7ee;"></div>
<span style="position:absolute;left:879.55px;top:519.02px;font-family:'Liberation Sans', sans-serif;font-size:13.1px;line-height:13.1px;font-weight:700;color:#000;white-space:pre;transform-origin:0 0;transform:scaleX(0.8694);">Fossa</span>
<span style="position:absolute;left:875.25px;top:538.02px;font-family:'Liberation Sans', sans-serif;font-size:13.1px;line-height:13.1px;font-weight:700;color:#000;white-space:pre;transform-origin:0 0;transform:scaleX(0.9197);">séptica</span>
<div style="position:absolute;left:940px;top:498px;width:275px;height:18px;background:#f2f2f2;"></div>
<div style="position:absolute;left:1217px;top:498px;width:78px;height:18px;background:#fff;"></div>
<svg style="position:absolute;left:1211px;top:498px;" width="4" height="4" viewBox="0 0 4 4"><path d="M0 0H4V4Z" fill="#ff0000"/></svg>
<span style="position:absolute;left:1248.90px;top:503.02px;font-family:'Liberation Sans', sans-serif;font-size:11.8px;line-height:11.8px;font-weight:400;color:#000;white-space:pre;transform-origin:0 0;transform:scaleX(0.9034);">OK</span>
<span style="position:absolute;left:973.05px;top:503.02px;font-family:'Liberation Sans', sans-serif;font-size:11.8px;line-height:11.8px;font-weight:400;color:#000;white-space:pre;transform-origin:0 0;transform:scaleX(1.0744);">Vol. útil adotado ≥ Vol. útil necessário</span>
<div style="position:absolute;left:940px;top:517px;width:275px;height:18px;background:#f2f2f2;"></div>
<div style="position:absolute;left:1217px;top:517px;width:78px;height:18px;background:#fff;"></div>
<svg style="position:absolute;left:1211px;top:517px;" width="4" height="4" viewBox="0 0 4 4"><path d="M0 0H4V4Z" fill="#ff0000"/></svg>
<span style="position:absolute;left:1248.90px;top:522.02px;font-family:'Liberation Sans', sans-serif;font-size:11.8px;line-height:11.8px;font-weight:400;color:#000;white-space:pre;transform-origin:0 0;transform:scaleX(0.9034);">OK</span>
<span style="position:absolute;left:1001.00px;top:522.02px;font-family:'Liberation Sans', sans-serif;font-size:11.8px;line-height:11.8px;font-weight:400;color:#000;white-space:pre;transform-origin:0 0;transform:scaleX(1.0398);">Largura interna (W) ≥ 0,80m</span>
<div style="position:absolute;left:940px;top:536px;width:275px;height:18px;background:#f2f2f2;"></div>
<div style="position:absolute;left:1217px;top:536px;width:78px;height:18px;background:#fff;"></div>
<svg style="position:absolute;left:1211px;top:536px;" width="4" height="4" viewBox="0 0 4 4"><path d="M0 0H4V4Z" fill="#ff0000"/></svg>
<span style="position:absolute;left:1248.90px;top:541.02px;font-family:'Liberation Sans', sans-serif;font-size:11.8px;line-height:11.8px;font-weight:400;color:#000;white-space:pre;transform-origin:0 0;transform:scaleX(0.9034);">OK</span>
<span style="position:absolute;left:1048.75px;top:541.02px;font-family:'Liberation Sans', sans-serif;font-size:11.8px;line-height:11.8px;font-weight:400;color:#000;white-space:pre;transform-origin:0 0;transform:scaleX(0.9725);">2 ≤ L/W ≤ 4</span>
<div style="position:absolute;left:940px;top:555px;width:275px;height:17px;background:#f2f2f2;"></div>
<div style="position:absolute;left:1217px;top:555px;width:78px;height:17px;background:#fff;"></div>
<svg style="position:absolute;left:1211px;top:555px;" width="4" height="4" viewBox="0 0 4 4"><path d="M0 0H4V4Z" fill="#ff0000"/></svg>
<span style="position:absolute;left:1248.90px;top:559.02px;font-family:'Liberation Sans', sans-serif;font-size:11.8px;line-height:11.8px;font-weight:400;color:#000;white-space:pre;transform-origin:0 0;transform:scaleX(0.9034);">OK</span>
<div style="position:absolute;left:854px;top:574px;width:84px;height:55px;background:#bdd7ee;"></div>
<span style="position:absolute;left:880.60px;top:586.02px;font-family:'Liberation Sans', sans-serif;font-size:13.1px;line-height:13.1px;font-weight:700;color:#000;white-space:pre;transform-origin:0 0;transform:scaleX(0.9409);">Filtro</span>
<span style="position:absolute;left:865.20px;top:605.02px;font-family:'Liberation Sans', sans-serif;font-size:13.1px;line-height:13.1px;font-weight:700;color:#000;white-space:pre;transform-origin:0 0;transform:scaleX(0.9844);">anaeróbio</span>
<div style="position:absolute;left:940px;top:574px;width:275px;height:18px;background:#f2f2f2;"></div>
<div style="position:absolute;left:1217px;top:574px;width:78px;height:18px;background:#fff;"></div>
<svg style="position:absolute;left:1211px;top:574px;" width="4" height="4" viewBox="0 0 4 4"><path d="M0 0H4V4Z" fill="#ff0000"/></svg>
<span style="position:absolute;left:1248.90px;top:579.02px;font-family:'Liberation Sans', sans-serif;font-size:11.8px;line-height:11.8px;font-weight:400;color:#000;white-space:pre;transform-origin:0 0;transform:scaleX(0.9034);">OK</span>
<span style="position:absolute;left:973.05px;top:579.02px;font-family:'Liberation Sans', sans-serif;font-size:11.8px;line-height:11.8px;font-weight:400;color:#000;white-space:pre;transform-origin:0 0;transform:scaleX(1.0744);">Vol. útil adotado ≥ Vol. útil necessário</span>
<div style="position:absolute;left:940px;top:593px;width:275px;height:18px;background:#f2f2f2;"></div>
<div style="position:absolute;left:1217px;top:593px;width:78px;height:18px;background:#fff;"></div>
<svg style="position:absolute;left:1211px;top:593px;" width="4" height="4" viewBox="0 0 4 4"><path d="M0 0H4V4Z" fill="#ff0000"/></svg>
<span style="position:absolute;left:1248.90px;top:598.02px;font-family:'Liberation Sans', sans-serif;font-size:11.8px;line-height:11.8px;font-weight:400;color:#000;white-space:pre;transform-origin:0 0;transform:scaleX(0.9034);">OK</span>
<div style="position:absolute;left:940px;top:612px;width:275px;height:17px;background:#f2f2f2;"></div>
<div style="position:absolute;left:1217px;top:612px;width:78px;height:17px;background:#fff;"></div>
<svg style="position:absolute;left:1211px;top:612px;" width="4" height="4" viewBox="0 0 4 4"><path d="M0 0H4V4Z" fill="#ff0000"/></svg>
<span style="position:absolute;left:1248.90px;top:616.02px;font-family:'Liberation Sans', sans-serif;font-size:11.8px;line-height:11.8px;font-weight:400;color:#000;white-space:pre;transform-origin:0 0;transform:scaleX(0.9034);">OK</span>
<div style="position:absolute;left:854px;top:631px;width:84px;height:36px;background:#bdd7ee;"></div>
<span style="position:absolute;left:863.25px;top:643.02px;font-family:'Liberation Sans', sans-serif;font-size:13.1px;line-height:13.1px;font-weight:700;color:#000;white-space:pre;transform-origin:0 0;transform:scaleX(0.9478);">Sumidouro</span>
<div style="position:absolute;left:940px;top:631px;width:275px;height:18px;background:#f2f2f2;"></div>
<div style="position:absolute;left:1217px;top:631px;width:78px;height:18px;background:#fff;"></div>
<svg style="position:absolute;left:1211px;top:631px;" width="4" height="4" viewBox="0 0 4 4"><path d="M0 0H4V4Z" fill="#ff0000"/></svg>
<span style="position:absolute;left:1248.90px;top:636.02px;font-family:'Liberation Sans', sans-serif;font-size:11.8px;line-height:11.8px;font-weight:400;color:#000;white-space:pre;transform-origin:0 0;transform:scaleX(0.9034);">OK</span>
<span style="position:absolute;left:958.05px;top:636.02px;font-family:'Liberation Sans', sans-serif;font-size:11.8px;line-height:11.8px;font-weight:400;color:#000;white-space:pre;transform-origin:0 0;transform:scaleX(1.0701);">Área infilt. adotada ≥ Área infilt. necessária</span>
<div style="position:absolute;left:940px;top:650px;width:275px;height:17px;background:#f2f2f2;"></div>
<div style="position:absolute;left:1217px;top:650px;width:78px;height:17px;background:#fff;"></div>
<svg style="position:absolute;left:1211px;top:650px;" width="4" height="4" viewBox="0 0 4 4"><path d="M0 0H4V4Z" fill="#ff0000"/></svg>
<span style="position:absolute;left:1248.90px;top:654.02px;font-family:'Liberation Sans', sans-serif;font-size:11.8px;line-height:11.8px;font-weight:400;color:#000;white-space:pre;transform-origin:0 0;transform:scaleX(0.9034);">OK</span>
<span style="position:absolute;left:1015.00px;top:598.02px;font-family:'Liberation Sans', sans-serif;font-size:11.8px;line-height:11.8px;font-weight:400;color:#000;white-space:pre;transform-origin:0 0;transform:scaleX(1.0725);">Vol. útil adotado ≥ 1m</span>
<span style="position:absolute;left:1137.20px;top:597.02px;font-family:'Liberation Sans', sans-serif;font-size:7.8px;line-height:7.8px;font-weight:700;color:#000;white-space:pre;transform-origin:0 0;transform:scaleX(0.8518);">3</span>
<span style="position:absolute;left:998.10px;top:559.02px;font-family:'Liberation Sans', sans-serif;font-size:11.8px;line-height:11.8px;font-weight:400;color:#000;white-space:pre;transform-origin:0 0;transform:scaleX(1.0488);">1,2m ≤ Altura útil (h</span>
<span style="position:absolute;left:1105.10px;top:560.02px;font-family:'Liberation Sans', sans-serif;font-size:10.2px;line-height:10.2px;font-weight:400;color:#000;white-space:pre;transform-origin:0 0;transform:scaleX(0.8815);">u</span>
<span style="position:absolute;left:1111.10px;top:559.02px;font-family:'Liberation Sans', sans-serif;font-size:11.8px;line-height:11.8px;font-weight:400;color:#000;white-space:pre;transform-origin:0 0;transform:scaleX(1.0836);">) ≤ 2,2m</span>
<span style="position:absolute;left:1014.65px;top:616.02px;font-family:'Liberation Sans', sans-serif;font-size:11.8px;line-height:11.8px;font-weight:400;color:#000;white-space:pre;transform-origin:0 0;transform:scaleX(1.1040);">Altura útil (h</span>
<span style="position:absolute;left:1084.65px;top:617.02px;font-family:'Liberation Sans', sans-serif;font-size:10.2px;line-height:10.2px;font-weight:400;color:#000;white-space:pre;transform-origin:0 0;transform:scaleX(0.8815);">u</span>
<span style="position:absolute;left:1090.65px;top:616.02px;font-family:'Liberation Sans', sans-serif;font-size:11.8px;line-height:11.8px;font-weight:400;color:#000;white-space:pre;transform-origin:0 0;transform:scaleX(1.0191);">) ≥ 1,20m</span>
<span style="position:absolute;left:997.15px;top:654.02px;font-family:'Liberation Sans', sans-serif;font-size:11.8px;line-height:11.8px;font-weight:400;color:#000;white-space:pre;transform-origin:0 0;transform:scaleX(1.0453);">Diâmetro interno (D</span>
<span style="position:absolute;left:1105.55px;top:655.02px;font-family:'Liberation Sans', sans-serif;font-size:10.2px;line-height:10.2px;font-weight:400;color:#000;white-space:pre;transform-origin:0 0;transform:scaleX(0.7062);">i</span>
<span style="position:absolute;left:1108.55px;top:654.02px;font-family:'Liberation Sans', sans-serif;font-size:11.8px;line-height:11.8px;font-weight:400;color:#000;white-space:pre;transform-origin:0 0;transform:scaleX(1.0111);">) ≥ 1,00m</span>
<svg style="position:absolute;left:0;top:0" width="1366" height="768" viewBox="0 0 1366 768"><defs><pattern id="bk" width="12.4" height="5.9" patternUnits="userSpaceOnUse" x="0" y="233.4"><rect width="12.4" height="5.9" fill="#3d3531"/><rect x="0" y="0" width="12.4" height="1.0" fill="#9c5229"/><rect x="0" y="0" width="0.8" height="5.9" fill="#8a4826"/><rect x="11.6" y="0" width="0.8" height="5.9" fill="#8a4826"/><rect x="1.00" y="1.3" width="1.9" height="1.5" fill="#ece6e2"/><rect x="1.00" y="3.4" width="1.9" height="1.4" fill="#ece6e2"/><rect x="3.75" y="1.3" width="1.9" height="1.5" fill="#ece6e2"/><rect x="3.75" y="3.4" width="1.9" height="1.4" fill="#ece6e2"/><rect x="6.50" y="1.3" width="1.9" height="1.5" fill="#ece6e2"/><rect x="6.50" y="3.4" width="1.9" height="1.4" fill="#ece6e2"/><rect x="9.25" y="1.3" width="1.9" height="1.5" fill="#ece6e2"/><rect x="9.25" y="3.4" width="1.9" height="1.4" fill="#ece6e2"/></pattern><pattern id="ob" width="12" height="5.87" patternUnits="userSpaceOnUse" x="1047.5" y="256.3"><rect width="12" height="5.87" fill="#e9792b"/><rect y="0" width="12" height="0.9" fill="#7d5a40"/><rect y="0.9" width="12" height="0.7" fill="#f2a15e"/></pattern><pattern id="gv" width="6" height="6" patternUnits="userSpaceOnUse" x="843" y="293"><rect width="6" height="6" fill="#7a7a7a"/><path d="M-1 2L2 -1M-1 5L5 -1M-1 8L8 -1M2 8L8 2M5 8L8 5" stroke="#2a2a2a" stroke-width="0.8"/><circle cx="1.6" cy="1.6" r="1.3" fill="#f8f8f8"/><circle cx="4.6" cy="4.4" r="1.35" fill="#f8f8f8"/><circle cx="4.4" cy="1.2" r="0.7" fill="#dcdcdc"/><circle cx="1.4" cy="4.6" r="0.75" fill="#e6e6e6"/></pattern><pattern id="dt" width="7.1" height="14.3" patternUnits="userSpaceOnUse" x="1063.2" y="302"><circle cx="3.55" cy="3.55" r="1.25" fill="#b9b9b9" stroke="#999" stroke-width="0.4"/><circle cx="0" cy="10.7" r="1.25" fill="#b9b9b9" stroke="#999" stroke-width="0.4"/><circle cx="7.1" cy="10.7" r="1.25" fill="#b9b9b9" stroke="#999" stroke-width="0.4"/></pattern></defs><rect x="550.1" y="228.3" width="62.8" height="5.2" fill="#d3d3d3" stroke="#8a8a8a" stroke-width="0.7"/><rect x="661.3" y="228.3" width="62.2" height="5.2" fill="#d3d3d3" stroke="#8a8a8a" stroke-width="0.7"/><path d="M566.1 229.2Q568.5 232 570.9 229.2" fill="#fff" stroke="#666" stroke-width="0.5"/><path d="M589.1 229.2Q591.5 232 593.9 229.2" fill="#fff" stroke="#666" stroke-width="0.5"/><path d="M678.1 229.2Q680.5 232 682.9 229.2" fill="#fff" stroke="#666" stroke-width="0.5"/><path d="M701.1 229.2Q703.5 232 705.9 229.2" fill="#fff" stroke="#666" stroke-width="0.5"/><g transform="translate(550.6 0)"><rect x="0" y="233.5" width="12.2" height="129.89999999999998" fill="url(#bk)"/></g><rect x="550.6" y="246.2" width="12.2" height="10.600000000000023" fill="#d3d3d3" stroke="#8a8a8a" stroke-width="0.7"/><rect x="550.6" y="305.5" width="12.2" height="9.5" fill="#d3d3d3" stroke="#8a8a8a" stroke-width="0.7"/><rect x="550.6" y="358.4" width="12.2" height="5.0" fill="#d3d3d3" stroke="#8a8a8a" stroke-width="0.7"/><path d="M550.6 233.5V363.4M562.8000000000001 233.5V363.4" stroke="#8a8a8a" stroke-width="0.7"/><g transform="translate(711.4 0)"><rect x="0" y="233.5" width="12.0" height="129.89999999999998" fill="url(#bk)"/></g><rect x="711.4" y="246.2" width="12.0" height="10.600000000000023" fill="#d3d3d3" stroke="#8a8a8a" stroke-width="0.7"/><rect x="711.4" y="305.5" width="12.0" height="9.5" fill="#d3d3d3" stroke="#8a8a8a" stroke-width="0.7"/><rect x="711.4" y="358.4" width="12.0" height="5.0" fill="#d3d3d3" stroke="#8a8a8a" stroke-width="0.7"/><path d="M711.4 233.5V363.4M723.4 233.5V363.4" stroke="#8a8a8a" stroke-width="0.7"/><g transform="translate(599.8 0)"><rect x="0" y="233.5" width="12.4" height="12.4" fill="url(#bk)"/></g><g transform="translate(661.9 0)"><rect x="0" y="233.5" width="12.4" height="12.4" fill="url(#bk)"/></g><rect x="599.4" y="245.9" width="75.4" height="6.4" fill="#d3d3d3" stroke="#8a8a8a" stroke-width="0.7"/><rect x="545.5" y="363.4" width="182.7" height="6.6" fill="#d3d3d3" stroke="#8a8a8a" stroke-width="0.7"/><path d="M563 281.3H711" stroke="#8a8a8a" stroke-width="0.8"/><rect x="630.7" y="230" width="12.6" height="104.2" fill="#ffffff" stroke="#8a8a8a" stroke-width="0.8"/><rect x="630.1" y="228.2" width="13.8" height="6.4" rx="1" fill="#ffffff" stroke="#8a8a8a" stroke-width="0.8"/><path d="M630.1 231.6H643.9" stroke="#8a8a8a" stroke-width="0.6"/><rect x="524" y="272.5" width="41" height="6.4" fill="#ffffff" stroke="#8a8a8a" stroke-width="0.8"/><path d="M524 270.8V280.6" stroke="#777" stroke-width="0.6"/><path d="M541 275.7H545" stroke="#555" stroke-width="0.6"/><path d="M544.4 274.2L548 275.7L544.4 277.2Z" fill="#e01818"/><rect x="569.3" y="258.8" width="6.6" height="48.4" fill="#ffffff" stroke="#8a8a8a" stroke-width="0.8"/><rect x="568.7" y="267.8" width="7.8" height="3.2" fill="#dcdcdc" stroke="#8a8a8a" stroke-width="0.7"/><rect x="568.7" y="281" width="7.8" height="3.4" fill="#dcdcdc" stroke="#8a8a8a" stroke-width="0.7"/><rect x="564.2" y="272" width="4.6" height="7.4" fill="#dcdcdc" stroke="#8a8a8a" stroke-width="0.7"/><rect x="693.4" y="258.8" width="9" height="54.4" fill="#ffffff" stroke="#8a8a8a" stroke-width="0.8"/><rect x="692.2" y="265.8" width="11.4" height="4" fill="#dcdcdc" stroke="#8a8a8a" stroke-width="0.7"/><rect x="692.2" y="285" width="11.4" height="4.6" fill="#dcdcdc" stroke="#8a8a8a" stroke-width="0.7"/><rect x="709" y="272.6" width="41" height="9.6" fill="#ffffff" stroke="#8a8a8a" stroke-width="0.8"/><rect x="703.3" y="272" width="6.2" height="10.6" rx="1.6" fill="#dcdcdc" stroke="#8a8a8a" stroke-width="0.7"/><path d="M750 270.6V284" stroke="#777" stroke-width="0.6"/><rect x="702" y="273.4" width="2" height="7.6" fill="#fff"/><path d="M722.5 277H730.6" stroke="#555" stroke-width="0.6"/><path d="M730.0 275.5L733.6 277L730.0 278.5Z" fill="#e01818"/><text x="592.6" y="273.8" font-family="'Liberation Sans', sans-serif" font-size="9.6" fill="#333" textLength="19.4" lengthAdjust="spacingAndGlyphs">N.A.</text><path d="M613 275.6H590.6V279" stroke="#555" stroke-width="0.6" fill="none"/><rect x="589.8" y="278.6" width="2" height="2" fill="#222"/><path d="M618.6 280V365" stroke="#555" stroke-width="0.6"/><path d="M617 279.6L620.2 282.8M617 362.2L620.2 365.4" stroke="#222" stroke-width="1"/><text x="603.4" y="327.6" font-family="'Liberation Sans', sans-serif" font-size="12.6" fill="#333">h</text><text x="610.2" y="329.2" font-family="'Liberation Sans', sans-serif" font-size="8" fill="#333">u</text><path d="M560.6 379H713.6M562.6 376V382M711.6 376V382" stroke="#555" stroke-width="0.6" fill="none"/><path d="M561.2 380.4L564.0 377.6M710.2 380.4L713.0 377.6" stroke="#222" stroke-width="1"/><text x="633" y="391.6" font-family="'Liberation Sans', sans-serif" font-size="11.6" fill="#333">L</text><rect x="831" y="228.7" width="62.2" height="5" fill="#d3d3d3" stroke="#8a8a8a" stroke-width="0.7"/><path d="M847.6 229.4Q850 232 852.4 229.4" fill="#fff" stroke="#666" stroke-width="0.5"/><path d="M870.6 229.4Q873 232 875.4 229.4" fill="#fff" stroke="#666" stroke-width="0.5"/><g transform="translate(831.3 0)"><rect x="0" y="233.7" width="11.8" height="129.8" fill="url(#bk)"/></g><rect x="831.3" y="246.6" width="11.8" height="8.599999999999994" fill="#d3d3d3" stroke="#8a8a8a" stroke-width="0.7"/><rect x="831.3" y="305" width="11.8" height="11" fill="#d3d3d3" stroke="#8a8a8a" stroke-width="0.7"/><rect x="831.3" y="329.4" width="11.8" height="4.600000000000023" fill="#d3d3d3" stroke="#8a8a8a" stroke-width="0.7"/><rect x="831.3" y="358.3" width="11.8" height="5.199999999999989" fill="#d3d3d3" stroke="#8a8a8a" stroke-width="0.7"/><path d="M831.3 233.7V363.5M843.0999999999999 233.7V363.5" stroke="#8a8a8a" stroke-width="0.7"/><g transform="translate(880.3 0)"><rect x="0" y="233.7" width="12.4" height="12.8" fill="url(#bk)"/></g><g transform="translate(932.6 0)"><rect x="0" y="252" width="11.6" height="111.5" fill="url(#bk)"/></g><rect x="932.6" y="305" width="11.6" height="11" fill="#d3d3d3" stroke="#8a8a8a" stroke-width="0.7"/><rect x="932.6" y="329.4" width="11.6" height="4.600000000000023" fill="#d3d3d3" stroke="#8a8a8a" stroke-width="0.7"/><rect x="932.6" y="358.3" width="11.6" height="5.199999999999989" fill="#d3d3d3" stroke="#8a8a8a" stroke-width="0.7"/><path d="M932.6 252V363.5M944.2 252V363.5" stroke="#8a8a8a" stroke-width="0.7"/><path d="M879.7 246.4H944.2V257H932.4V252.3H879.7Z" fill="#d3d3d3" stroke="#8a8a8a" stroke-width="0.7"/><rect x="825.2" y="363.5" width="125.4" height="6.8" fill="#d3d3d3" stroke="#8a8a8a" stroke-width="0.7"/><rect x="843.1" y="293" width="89.5" height="36.4" fill="url(#gv)"/><rect x="843.1" y="329.4" width="89.5" height="4.6" fill="#e4e4e4" stroke="#9a9a9a" stroke-width="0.5"/><path d="M846.0 329.6V333.8M849.1 329.6V333.8M852.2 329.6V333.8M855.3 329.6V333.8M858.4 329.6V333.8M861.5 329.6V333.8M864.6 329.6V333.8M867.7 329.6V333.8M870.8 329.6V333.8M873.9 329.6V333.8M877.0 329.6V333.8M880.1 329.6V333.8M883.2 329.6V333.8M886.3 329.6V333.8M889.4 329.6V333.8M892.5 329.6V333.8M895.6 329.6V333.8M898.7 329.6V333.8M901.8 329.6V333.8M904.9 329.6V333.8M908.0 329.6V333.8M911.1 329.6V333.8M914.2 329.6V333.8M917.3 329.6V333.8M920.4 329.6V333.8M923.5 329.6V333.8M926.6 329.6V333.8M929.7 329.6V333.8" stroke="#a8a8a8" stroke-width="0.7"/><rect x="900.4" y="230.4" width="12.4" height="109.6" fill="#ffffff" stroke="#8a8a8a" stroke-width="0.8"/><rect x="899.8" y="228.7" width="13.6" height="6.2" rx="1" fill="#ffffff" stroke="#8a8a8a" stroke-width="0.8"/><path d="M899.8 232H913.4" stroke="#8a8a8a" stroke-width="0.6"/><rect x="864.6" y="267" width="9.4" height="79.2" fill="#ffffff" stroke="#8a8a8a" stroke-width="0.8"/><rect x="863.8" y="265.6" width="11" height="4.6" fill="#dcdcdc" stroke="#8a8a8a" stroke-width="0.7"/><rect x="863.8" y="285.2" width="11" height="4.8" fill="#dcdcdc" stroke="#8a8a8a" stroke-width="0.7"/><rect x="804.2" y="272.6" width="54" height="8.8" fill="#ffffff" stroke="#8a8a8a" stroke-width="0.8"/><rect x="857.6" y="271.6" width="5" height="10.8" fill="#dcdcdc" stroke="#8a8a8a" stroke-width="0.7"/><rect x="862" y="273.4" width="3.6" height="7.4" fill="#fff"/><path d="M804.2 270.6V283.4" stroke="#777" stroke-width="0.6"/><path d="M823.4 277H830.4" stroke="#555" stroke-width="0.6"/><path d="M829.8 275.5L833.4 277L829.8 278.5Z" fill="#e01818"/><rect x="921.2" y="283.4" width="50.4" height="9.2" fill="#ffffff" stroke="#8a8a8a" stroke-width="0.8"/><path d="M971.6 281.4V294.6" stroke="#777" stroke-width="0.6"/><path d="M940.6 288H948.6" stroke="#555" stroke-width="0.6"/><path d="M948.0 286.5L951.6 288L948.0 289.5Z" fill="#e01818"/><path d="M868.8 307V315" stroke="#555" stroke-width="0.6"/><path d="M867.3 314.4L868.8 318L870.3 314.4Z" fill="#e01818"/><path d="M812.8 291V366M809.8 293H821.8M809.8 364H821.8" stroke="#555" stroke-width="0.6" fill="none"/><path d="M811.4 291.6L814.1999999999999 294.4M811.4 362.6L814.1999999999999 365.4" stroke="#222" stroke-width="1"/><text x="798" y="332.4" font-family="'Liberation Sans', sans-serif" font-size="12.6" fill="#333">h</text><text x="804.8" y="334" font-family="'Liberation Sans', sans-serif" font-size="8" fill="#333">u</text><path d="M841 378.4H935M843 375.4V381.4M933 375.4V381.4" stroke="#555" stroke-width="0.6" fill="none"/><path d="M841.6 379.79999999999995L844.4 377.0M931.6 379.79999999999995L934.4 377.0" stroke="#222" stroke-width="1"/><text x="883" y="391.8" font-family="'Liberation Sans', sans-serif" font-size="11.6" fill="#333">D</text><text x="891.6" y="394.4" font-family="'Liberation Sans', sans-serif" font-size="7.6" fill="#333">i</text><rect x="1046.9" y="228.5" width="59.8" height="5.4" fill="#d3d3d3" stroke="#8a8a8a" stroke-width="0.7"/><path d="M1063.0 229.2Q1065.4 232 1067.8000000000002 229.2" fill="#fff" stroke="#666" stroke-width="0.5"/><path d="M1085.6 229.2Q1088 232 1090.4 229.2" fill="#fff" stroke="#666" stroke-width="0.5"/><g transform="translate(1047.5 0)"><rect x="0" y="234" width="11.2" height="12.2" fill="url(#bk)"/></g><g transform="translate(1095.2 0)"><rect x="0" y="234" width="11.2" height="12.2" fill="url(#bk)"/></g><rect x="1047.5" y="256.3" width="11.2" height="159" fill="url(#ob)"/><rect x="1047.5" y="246.2" width="11.2" height="10.100000000000023" fill="#d3d3d3" stroke="#8a8a8a" stroke-width="0.7"/><rect x="1047.5" y="332.6" width="11.2" height="10.799999999999955" fill="#d3d3d3" stroke="#8a8a8a" stroke-width="0.7"/><rect x="1047.5" y="415.3" width="11.2" height="11.0" fill="#d3d3d3" stroke="#8a8a8a" stroke-width="0.7"/><rect x="1117.8" y="256.3" width="11.2" height="159" fill="url(#ob)"/><rect x="1117.8" y="332.6" width="11.2" height="10.799999999999955" fill="#d3d3d3" stroke="#8a8a8a" stroke-width="0.7"/><rect x="1117.8" y="415.3" width="11.2" height="11.0" fill="#d3d3d3" stroke="#8a8a8a" stroke-width="0.7"/><path d="M1094.8 246.1H1129.1V256.4H1117.7V252.8H1094.8Z" fill="#d3d3d3" stroke="#8a8a8a" stroke-width="0.7"/><path d="M1047.5 234V426.3M1058.7 234V426.3M1117.8 252.8V426.3M1129 256V426.3" stroke="#8a8a8a" stroke-width="0.6"/><rect x="1061.6" y="302" width="54.6" height="104" fill="url(#dt)"/><rect x="1076.6" y="400.4" width="23.4" height="7" fill="#fff"/><text x="1078.4" y="406.6" font-family="'Liberation Sans', sans-serif" font-size="5.8" fill="#555" textLength="19.6" lengthAdjust="spacingAndGlyphs">BRITA</text><g transform="translate(216.4 115.4)"><rect x="842.5" y="293" width="58.8" height="17.9" fill="url(#gv)"/></g><path d="M1020.4 283.2H1074V293.6H1020.4Z" fill="#ffffff" stroke="#8a8a8a" stroke-width="0.8"/><path d="M1020.4 281.4V295.4" stroke="#777" stroke-width="0.6"/><path d="M1076 283.2C1086 283.2 1093 288 1093.2 296H1083C1083 294.4 1080 293.6 1076 293.6Z" fill="#ffffff" stroke="#8a8a8a" stroke-width="0.8"/><rect x="1073.6" y="282.6" width="5.6" height="11.6" fill="#dcdcdc" stroke="#8a8a8a" stroke-width="0.7"/><rect x="1082.8" y="295.6" width="10.6" height="6.8" fill="#dcdcdc" stroke="#8a8a8a" stroke-width="0.7"/><path d="M1043.6 288.4H1052.2" stroke="#555" stroke-width="0.6"/><path d="M1051.6000000000001 286.9L1055.2 288.4L1051.6000000000001 289.9Z" fill="#e01818"/><path d="M1038 291V428M1035 426.3H1047" stroke="#555" stroke-width="0.6" fill="none"/><path d="M1036.4 290.4L1039.6 293.6M1036.4 424.7L1039.6 427.9" stroke="#222" stroke-width="1"/><text x="1023" y="364" font-family="'Liberation Sans', sans-serif" font-size="12.6" fill="#333">h</text><text x="1029.8" y="365.6" font-family="'Liberation Sans', sans-serif" font-size="8" fill="#333">u</text><path d="M1056.2 434H1120.4M1058.2 431V437M1118.4 431V437" stroke="#555" stroke-width="0.6" fill="none"/><path d="M1056.8 435.4L1059.6000000000001 432.6M1117.0 435.4L1119.8000000000002 432.6" stroke="#222" stroke-width="1"/><text x="1082.8" y="449.6" font-family="'Liberation Sans', sans-serif" font-size="12.6" fill="#333">D</text><text x="1092.2" y="452" font-family="'Liberation Sans', sans-serif" font-size="7.8" fill="#333">i</text></svg>
<svg style="position:absolute;left:230px;top:425px;" width="30" height="20" viewBox="0 0 30 20"><path d="M20.5 6.5L10 14.2" stroke="#222" stroke-width="0.9" fill="none"/><path d="M7 16.5L9.4 11.6L12.8 16.3Z" fill="#000"/></svg>
<div style="position:absolute;left:250px;top:431px;width:325px;height:147px;background:#ffffe1;border:1px solid #000;"></div>
<span style="position:absolute;left:253.20px;top:456.02px;font-family:'Liberation Sans', sans-serif;font-size:11.8px;line-height:11.8px;font-weight:700;color:#000;white-space:pre;transform-origin:0 0;transform:scaleX(0.9604);">Clique na célula ao lado e selecione na lista de quanto em</span>
<span style="position:absolute;left:253.20px;top:473.02px;font-family:'Liberation Sans', sans-serif;font-size:11.8px;line-height:11.8px;font-weight:700;color:#000;white-space:pre;transform-origin:0 0;transform:scaleX(0.9479);">quantos anos será realizada a limpeza da fossa</span>
<span style="position:absolute;left:253.20px;top:507.02px;font-family:'Liberation Sans', sans-serif;font-size:11.8px;line-height:11.8px;font-weight:700;color:#000;white-space:pre;transform-origin:0 0;transform:scaleX(0.9572);">OBS.: Essa informação será utilizada para obter a taxa de</span>
<span style="position:absolute;left:253.20px;top:524.02px;font-family:'Liberation Sans', sans-serif;font-size:11.8px;line-height:11.8px;font-weight:700;color:#000;white-space:pre;transform-origin:0 0;transform:scaleX(0.9665);">acumulação total de lodo (K), em dias, na Tabela A.2 da</span>
<span style="position:absolute;left:253.20px;top:541.02px;font-family:'Liberation Sans', sans-serif;font-size:11.8px;line-height:11.8px;font-weight:700;color:#000;white-space:pre;transform-origin:0 0;transform:scaleX(1.0229);">NBR 17076 de 2024</span>
<div style="position:absolute;left:0px;top:679px;width:1366px;height:27px;background:#f4f4f4;"></div>
<div style="position:absolute;left:0px;top:678px;width:1346px;height:1px;background:#ababab;"></div>
<svg style="position:absolute;left:26px;top:688px;" width="6" height="8" viewBox="0 0 6 8"><path d="M5.5 0.3V7.7L0.6 4Z" fill="#c6c6c6"/></svg>
<svg style="position:absolute;left:55px;top:688px;" width="6" height="8" viewBox="0 0 6 8"><path d="M0.5 0.3V7.7L5.4 4Z" fill="#c6c6c6"/></svg>
<div style="position:absolute;left:100px;top:679px;width:183px;height:22px;background:#fff;"></div>
<div style="position:absolute;left:100px;top:679px;width:1px;height:22px;background:#ababab;"></div>
<div style="position:absolute;left:282px;top:679px;width:1px;height:22px;background:#ababab;"></div>
<div style="position:absolute;left:100px;top:701px;width:183px;height:2px;background:#217346;"></div>
<span style="position:absolute;left:112.70px;top:685.02px;font-family:'Liberation Sans', sans-serif;font-size:13.2px;line-height:13.2px;font-weight:700;color:#217346;white-space:pre;transform-origin:0 0;transform:scaleX(0.9651);">Fossa, Filtro e Sumidouro</span>
<span style="position:absolute;left:297.00px;top:685.02px;font-family:'Liberation Sans', sans-serif;font-size:13.2px;line-height:13.2px;font-weight:400;color:#444;white-space:pre;transform-origin:0 0;transform:scaleX(1.0033);">Memorial de Cálculo</span>
<div style="position:absolute;left:432px;top:682px;width:1px;height:20px;background:#ababab;"></div>
<svg style="position:absolute;left:465px;top:683px;" width="18" height="18" viewBox="0 0 18 18"><circle cx="9" cy="9" r="7.6" fill="none" stroke="#6e6e6e" stroke-width="1.2"/><path d="M9 5.2V12.8M5.2 9H12.8" stroke="#6e6e6e" stroke-width="1.6"/></svg>
<div style="position:absolute;left:819px;top:686.6px;width:2px;height:2px;background:#b0b0b0;"></div>
<div style="position:absolute;left:819px;top:690.6px;width:2px;height:2px;background:#b0b0b0;"></div>
<div style="position:absolute;left:819px;top:694.6px;width:2px;height:2px;background:#b0b0b0;"></div>
<div style="position:absolute;left:836px;top:685px;width:495px;height:15px;background:#e8e8e8;"></div>
<div style="position:absolute;left:836px;top:685px;width:16px;height:15px;background:#fff;border:1px solid #ababab;"></div>
<svg style="position:absolute;left:841px;top:688.5px;" width="5" height="8" viewBox="0 0 5 8"><path d="M4.6 0.3V7.7L0.4 4Z" fill="#5a5a5a"/></svg>
<div style="position:absolute;left:851px;top:685px;width:98px;height:15px;background:#fff;border:1px solid #ababab;"></div>
<div style="position:absolute;left:1330px;top:685px;width:15px;height:15px;background:#fff;border:1px solid #ababab;"></div>
<svg style="position:absolute;left:1336px;top:688.5px;" width="5" height="8" viewBox="0 0 5 8"><path d="M0.4 0.3V7.7L4.6 4Z" fill="#5a5a5a"/></svg>
<div style="position:absolute;left:0px;top:706px;width:1366px;height:22px;background:#217346;"></div>
<span style="position:absolute;left:7.20px;top:712.02px;font-family:'Liberation Sans', sans-serif;font-size:11.6px;line-height:11.6px;font-weight:400;color:#fff;white-space:pre;transform-origin:0 0;transform:scaleX(0.9699);">Célula B12 comentada por Pedro</span>
<div style="position:absolute;left:1080px;top:706px;width:38px;height:22px;background:#185c37;"></div>
<svg style="position:absolute;left:1092px;top:710px;" width="13" height="13" viewBox="0 0 13 13"><rect x="0.6" y="0.6" width="11.8" height="11.8" fill="none" stroke="#fff" stroke-width="1.2"/><path d="M4.5 0.6V12.4M8.5 0.6V12.4M0.6 4.5H12.4M0.6 8.5H12.4" stroke="#fff" stroke-width="1.1"/></svg>
<svg style="position:absolute;left:1130px;top:710px;" width="14" height="13" viewBox="0 0 14 13"><rect x="0.6" y="0.6" width="12.8" height="11.8" fill="none" stroke="#fff" stroke-width="1.2"/><rect x="3.6" y="3.2" width="6.8" height="6.8" fill="none" stroke="#fff" stroke-width="1"/><path d="M5 5.4H9M5 7.6H9" stroke="#fff" stroke-width="0.9"/></svg>
<svg style="position:absolute;left:1168px;top:710px;" width="14" height="13" viewBox="0 0 14 13"><rect x="0.6" y="0.6" width="12.8" height="11.8" fill="none" stroke="#fff" stroke-width="1.2"/><rect x="2.6" y="0.6" width="4" height="6.6" fill="#fff"/><path d="M9 0.6V7.2H2.6" fill="none" stroke="#fff" stroke-width="1"/></svg>
<div style="position:absolute;left:1199.4px;top:716px;width:6px;height:2px;background:#fff;"></div>
<div style="position:absolute;left:1209px;top:716.2px;width:100px;height:1px;background:#fff;"></div>
<div style="position:absolute;left:1251.6px;top:711.6px;width:4.6px;height:10.6px;background:#fff;"></div>
<div style="position:absolute;left:1259px;top:714px;width:1px;height:5.4px;background:#fff;"></div>
<div style="position:absolute;left:1313px;top:716px;width:8px;height:2px;background:#fff;"></div>
<div style="position:absolute;left:1316px;top:713px;width:2px;height:8px;background:#fff;"></div>
<span style="position:absolute;left:1337.60px;top:712.02px;font-family:'Liberation Sans', sans-serif;font-size:11.4px;line-height:11.4px;font-weight:400;color:#fff;white-space:pre;transform-origin:0 0;transform:scaleX(0.8942);">90%</span>
<div style="position:absolute;left:0px;top:728px;width:1366px;height:40px;background:linear-gradient(90deg,#f0ebbd 0%,#ece6c6 3.5%,#e9e1d2 25%,#e8e0d2 45%,#ede9c8 53%,#f2f0b8 60%,#f1eead 75%,#eeeaa6 90%,#ebe7aa 100%);"></div>
<svg style="position:absolute;left:16px;top:740px;" width="17" height="16" viewBox="0 0 17 16"><path d="M0 2.2L6.8 1.3V7.6H0ZM7.8 1.1L16.6 0V7.6H7.8ZM0 8.5H6.8V14.8L0 13.9ZM7.8 8.5H16.6V16L7.8 14.9Z" fill="#000"/></svg>
<div style="position:absolute;left:48px;top:728px;width:288px;height:39px;background:#fff;border:1px solid #d6d2c4;border-top:none;"></div>
<svg style="position:absolute;left:60px;top:740px;" width="17" height="17" viewBox="0 0 17 17"><circle cx="10.4" cy="6.4" r="5" fill="none" stroke="#222" stroke-width="1.4"/><path d="M6.8 10L0.8 16" stroke="#222" stroke-width="1.5"/></svg>
<span style="position:absolute;left:88.40px;top:741.02px;font-family:'Liberation Sans', sans-serif;font-size:15.2px;line-height:15.2px;font-weight:400;color:#3a3a3a;white-space:pre;transform-origin:0 0;transform:scaleX(0.8972);">Pesquisar</span>
<svg style="position:absolute;left:255px;top:728px;" width="81" height="39" viewBox="0 0 81 39"><clipPath id="fl"><rect x="0" y="0" width="80" height="38.5"/></clipPath><g clip-path="url(#fl)"><path d="M0 39C10 34 24 31.5 40 31C56 30.5 70 31.5 80 33V39Z" fill="#86a352"/><path d="M22 39C34 34 60 32 80 35V39Z" fill="#6f9046"/><path d="M16 20C12 24 10.6 31 14 35.6C18 38.4 24.6 37 25.4 31.4C25.8 27 20.4 25.6 18.4 21.4L17.2 17.4Z" fill="#5d4492"/><path d="M18.8 25C22.4 27 23.4 31 22.2 35.4" stroke="#8e74c2" stroke-width="1.3" fill="none"/><path d="M36 30L37 39M55 26L54 39" stroke="#4d8b34" stroke-width="1.8"/><path d="M43 39C41 33 44 30 48 33C50 35 50 37 50 39ZM58 39C59 31 64 29 67 33C63 33 61 36 61 39ZM28 39C28 34 31 32 34 35L35 39Z" fill="#4f9a3a"/><path d="M26 20C27 14 29.4 14 31.4 19C32.4 14 36.4 13.4 37 19C38.4 15 42.4 16 41.4 21C41.4 27.6 38.4 33 34.4 33C29.4 33 26 26.4 26 20Z" fill="#f6c21c"/><path d="M30.6 21.4C31.4 18.4 36 18.4 36.8 21.8C36 24.8 31.4 24.8 30.6 21.4Z" fill="#f28a1e"/><path d="M42 13C43 4 48 3 51.6 11C52.6 3.6 59 2 60.6 11C63 5 70 6.6 68.2 14.4C67 22 62 27 55.4 27C47.4 27 42 21 42 13Z" fill="#f8c51a"/><path d="M50 11C52 6 60 6 61.6 11.6C60 16 52 16 50 11Z" fill="#f0821c"/><path d="M46 15C47 21 51 25 55.4 26.4M64.4 15C63.6 21 60 25 56.4 26.4" stroke="#e8a414" stroke-width="0.9" fill="none"/><circle cx="68.6" cy="31.6" r="5.4" fill="#f3a61e"/><circle cx="68.6" cy="31.6" r="2.3" fill="#c9741a"/></g></svg>
<svg style="position:absolute;left:351px;top:739px;" width="18" height="17" viewBox="0 0 18 17"><rect x="1" y="4.4" width="10.4" height="8.4" fill="none" stroke="#111" stroke-width="1.3"/><path d="M0.4 0.8H12M0.4 16.2H12" stroke="#111" stroke-width="1.3"/><path d="M15.4 3.4V8M15.4 10.6V13.8" stroke="#111" stroke-width="1.6"/></svg>
<svg style="position:absolute;left:398px;top:736px;" width="26" height="23" viewBox="0 0 26 23"><defs><linearGradient id="cpa" x1="0" y1="0" x2="0" y2="1"><stop offset="0" stop-color="#1f8ff2"/><stop offset="0.5" stop-color="#35b8a0"/><stop offset="0.8" stop-color="#c8d030"/><stop offset="1" stop-color="#f4c21c"/></linearGradient><linearGradient id="cpb" x1="0" y1="0" x2="0" y2="1"><stop offset="0" stop-color="#ad52f2"/><stop offset="0.45" stop-color="#f0569a"/><stop offset="1" stop-color="#ffa24a"/></linearGradient></defs><path d="M12.4 0.6H16.2C17.6 0.6 18.2 1.6 18.6 2.8L19.6 6.8H14.4Z" fill="#1a56dc"/><path d="M7.4 21.4H10C11.2 21.4 11.8 20.6 12.2 19.4L13.4 15.4H8.2L6 18.6C5.4 20 6 21.4 7.4 21.4Z" fill="#f0562e"/><path d="M6.4 0.6H13.4C15 0.6 15.2 1.8 14.8 3.2L11.8 13.2C11.4 14.6 10.4 15.4 9 15.4H2.4C0.8 15.4 0 14.2 0.6 12.6L3.8 2.6C4.2 1.4 5 0.6 6.4 0.6Z" fill="url(#cpa)"/><path d="M17.2 6.6H22C23.6 6.6 24.2 7.8 23.6 9.4L20.6 19.4C20.2 20.6 19.2 21.4 17.8 21.4H10.2C11.6 21.4 12.2 20.4 12.6 19.2L15.4 8.8C15.8 7.4 16.2 6.6 17.2 6.6Z" fill="url(#cpb)"/></svg>
<svg style="position:absolute;left:447px;top:736px;" width="26" height="24" viewBox="0 0 26 24"><defs><linearGradient id="eg1" x1="0" y1="0.3" x2="1" y2="0.5"><stop offset="0" stop-color="#2a9fe8"/><stop offset="0.5" stop-color="#2cc3c0"/><stop offset="1" stop-color="#5fe05a"/></linearGradient></defs><path d="M12.8 0.8C19.6 0.8 24.8 5.8 24.8 11.4C24.8 15 22 17.4 18.8 17.4C16 17.4 14.2 16 14.8 14.6C15.6 13 16 12 15.6 10.4C15 8.2 12.6 6.6 10 6.8C6.4 7 3.6 10 3.6 14C3.6 19 8 23 13.4 23.2C6.6 23.6 0.8 18.6 0.8 12C0.8 5.6 6 0.8 12.8 0.8Z" fill="url(#eg1)"/><path d="M3.6 14C3.6 19.4 8.6 23.6 14.4 23.2C18 22.8 20.6 21 22.2 18.6C20 19.8 17 20 14.6 18.8C11.6 17.4 10.4 14.2 11.6 11.4C9.6 9.8 5.8 9.4 3.6 14Z" fill="#1368be"/><path d="M0.8 12C0.8 5.6 6 0.8 12.8 0.8C8 1.6 4.4 5.4 3.7 11C3.5 16 6 21 13.4 23.2C6.6 23.6 0.8 18.6 0.8 12Z" fill="#1b87dc"/></svg>
<svg style="position:absolute;left:497px;top:738px;" width="24" height="20" viewBox="0 0 24 20"><path d="M0.6 2.2C0.6 1.4 1.2 0.8 2 0.8H8.6L10.8 3.2H22C22.8 3.2 23.4 3.8 23.4 4.6V17H0.6Z" fill="#f5b82e"/><path d="M0.6 6.4H23.4V18.2C23.4 19 22.8 19.6 22 19.6H2C1.2 19.6 0.6 19 0.6 18.2Z" fill="#fbd562"/><path d="M6.6 12.4H17.4V19.6H14.2V15.6H9.8V19.6H6.6Z" fill="#3b8fe0"/></svg>
<svg style="position:absolute;left:546px;top:736px;" width="24" height="23" viewBox="0 0 24 23"><rect x="0.4" y="0.4" width="23" height="22.4" rx="4" fill="#b30b00"/><path d="M5.4 17.6C7 14.6 10 10 11.2 5.6C11.6 4 13 4 12.8 5.8C12.4 9.4 14.4 13.4 18.6 14.6C20 15 19.6 16.4 18 16C14 15 9 15.6 6.4 18.2C5.6 19 4.8 18.6 5.4 17.6Z" fill="none" stroke="#fff" stroke-width="1.5"/></svg>
<svg style="position:absolute;left:594px;top:737px;" width="26" height="22" viewBox="0 0 26 22"><path d="M0.6 8L13 0.6L25.4 8V21.4H0.6Z" fill="#1172c4"/><path d="M3 7H23V16H3Z" fill="#fff"/><path d="M0.6 8.6L13 16.4L25.4 8.6V21.4H0.6Z" fill="#2d9cf2"/><path d="M0.6 21.4L10 14.6L13 16.4L16 14.6L25.4 21.4Z" fill="#1a84dc"/></svg>
<svg style="position:absolute;left:643px;top:736px;" width="26" height="26" viewBox="0 0 26 26"><circle cx="13" cy="13" r="12.4" fill="#fff"/><path d="M13 0.6A12.4 12.4 0 0 1 23.74 6.8H13A6.2 6.2 0 0 0 7.63 9.9L2.26 6.8A12.4 12.4 0 0 1 13 0.6Z" fill="#e33b2e"/><path d="M23.74 6.8A12.4 12.4 0 0 1 13 25.4L18.37 16.1A6.2 6.2 0 0 0 18.37 9.9L18.4 6.8Z" fill="#fcc31e"/><path d="M13 25.4A12.4 12.4 0 0 1 2.26 6.8L7.63 16.1A6.2 6.2 0 0 0 13 19.2L16.6 19.6Z" fill="#30a452"/><circle cx="13" cy="13" r="5.6" fill="#fff"/><circle cx="13" cy="13" r="4.5" fill="#3b82f0"/></svg>
<svg style="position:absolute;left:693px;top:737px;" width="25" height="23" viewBox="0 0 25 23"><rect x="9" y="2.4" width="15" height="18.4" fill="#fff" stroke="#2b579a" stroke-width="1.1"/><path d="M15 6H22M15 9H22M15 12H22M15 15H22M15 18H22" stroke="#2b579a" stroke-width="1.2"/><path d="M0.4 2.6L14 0.4V22.6L0.4 20.4Z" fill="#2b579a"/><path d="M3 7.4L4.8 15.6L7.2 8.4L9.6 15.6L11.4 7.4" fill="none" stroke="#fff" stroke-width="1.5"/></svg>
<div style="position:absolute;left:730px;top:728px;width:48px;height:40px;background:rgba(255,255,255,0.42);"></div>
<div style="position:absolute;left:730px;top:766px;width:48px;height:2px;background:#2f7fd6;"></div>
<svg style="position:absolute;left:742px;top:737px;" width="25" height="23" viewBox="0 0 25 23"><rect x="9" y="2.4" width="15" height="18.4" fill="#fff" stroke="#1e7145" stroke-width="1.1"/><path d="M14 6H23M14 9.4H23M14 12.8H23M14 16.2H23M18.6 3V20" stroke="#1e7145" stroke-width="1.3"/><path d="M0.4 2.6L14 0.4V22.6L0.4 20.4Z" fill="#1e7145"/><path d="M4 7L10.4 16.2M10.4 7L4 16.2" stroke="#fff" stroke-width="1.9"/></svg>
<svg style="position:absolute;left:899px;top:733px;" width="28" height="27" viewBox="0 0 28 27"><defs><radialGradient id="sun" cx="0.45" cy="0.4" r="0.7"><stop offset="0" stop-color="#fbb836"/><stop offset="1" stop-color="#f08a1c"/></radialGradient></defs><circle cx="11.8" cy="16" r="9" fill="url(#sun)"/><path d="M3.6 11.4C1 11.4 0.6 8 3 7.4C3 4.6 6.4 3.4 8 5.4C9.6 2.6 14 3.6 13.8 7C16.4 7 16.6 11.4 13.8 11.4Z" fill="#dde8f6" stroke="#b4c6e0" stroke-width="0.5"/><path d="M12.4 24.4C9.8 24.4 9.4 21 11.8 20.4C11.8 17.6 15.2 16.4 16.8 18.4C18.4 15.6 22.8 16.6 22.6 20C25.2 20 25.4 24.4 22.6 24.4Z" fill="#dde8f6" stroke="#b4c6e0" stroke-width="0.5"/><circle cx="18.8" cy="8.8" r="5.7" fill="#d6262c"/></svg>
<span style="position:absolute;left:916.20px;top:738.02px;font-family:'Liberation Sans', sans-serif;font-size:8.8px;line-height:8.8px;font-weight:700;color:#fff;white-space:pre;transform-origin:0 0;transform:scaleX(0.7745);">1</span>
<span style="position:absolute;left:932.40px;top:740.02px;font-family:'Liberation Sans', sans-serif;font-size:15px;line-height:15px;font-weight:400;color:#2a2a2a;white-space:pre;transform-origin:0 0;transform:scaleX(0.8295);">25°C</span>
<span style="position:absolute;left:971.00px;top:740.02px;font-family:'Liberation Sans', sans-serif;font-size:15px;line-height:15px;font-weight:400;color:#2a2a2a;white-space:pre;transform-origin:0 0;transform:scaleX(0.8843);">Parc ensolarado</span>
<svg style="position:absolute;left:1092px;top:743px;" width="15" height="9" viewBox="0 0 15 9"><path d="M1 8L7.4 1.4L13.8 8" fill="none" stroke="#111" stroke-width="1.5"/></svg>
<svg style="position:absolute;left:1114px;top:741px;" width="18" height="13" viewBox="0 0 18 13"><rect x="5.4" y="2.6" width="10.4" height="8" rx="1" fill="none" stroke="#111" stroke-width="1.2"/><path d="M16.4 5V8.4" stroke="#111" stroke-width="1.4"/><path d="M2.4 0.4V3M4.8 0.4V3M1 3H6.2V5.4C6.2 7.2 1 7.2 1 5.4ZM3.6 7V9.2C3.6 11 5.4 10.6 5.4 9.4" fill="none" stroke="#111" stroke-width="1.1"/></svg>
<svg style="position:absolute;left:1140px;top:739px;" width="13" height="18" viewBox="0 0 13 18"><path d="M2 2.4C5 0.4 8 0.4 11 2.4M2 15.6C5 17.6 8 17.6 11 15.6" fill="none" stroke="#111" stroke-width="1.1"/><rect x="0.8" y="5" width="8.4" height="8" rx="1.6" fill="none" stroke="#111" stroke-width="1.2"/><path d="M9.4 8L12.4 6.4V11.6L9.4 10Z" fill="#111"/></svg>
<svg style="position:absolute;left:1165px;top:741px;" width="15" height="14" viewBox="0 0 15 14"><path d="M1 13C1 6.6 6.4 1.4 13.6 1.2" fill="none" stroke="#111" stroke-width="1.2"/><path d="M4.4 13.2C4.4 8.6 8.4 4.8 13.6 4.6" fill="none" stroke="#111" stroke-width="1.2"/><path d="M7.8 13.4C7.8 10.4 10.2 8.2 13.6 8" fill="none" stroke="#111" stroke-width="1.2"/><circle cx="12.2" cy="12.2" r="1.6" fill="#111"/></svg>
<svg style="position:absolute;left:1186px;top:740px;" width="17" height="15" viewBox="0 0 17 15"><path d="M0.8 5H3.6L7.6 1.2V13.8L3.6 10H0.8Z" fill="none" stroke="#111" stroke-width="1.2"/><path d="M10 4.8C11.4 6.4 11.4 8.6 10 10.2M12.2 2.8C14.6 5.4 14.6 9.6 12.2 12.2M14.4 1C17.6 4.6 17.6 10.4 14.4 14" fill="none" stroke="#111" stroke-width="1"/></svg>
<span style="position:absolute;left:1213.40px;top:734.02px;font-family:'Liberation Sans', sans-serif;font-size:12.6px;line-height:12.6px;font-weight:400;color:#222;white-space:pre;transform-origin:0 0;transform:scaleX(0.8133);">POR</span>
<span style="position:absolute;left:1212.40px;top:752.02px;font-family:'Liberation Sans', sans-serif;font-size:12.6px;line-height:12.6px;font-weight:400;color:#222;white-space:pre;transform-origin:0 0;transform:scaleX(0.8190);">PTB2</span>
<span style="position:absolute;left:1264.00px;top:734.02px;font-family:'Liberation Sans', sans-serif;font-size:12.6px;line-height:12.6px;font-weight:400;color:#222;white-space:pre;transform-origin:0 0;transform:scaleX(0.8440);">14:37</span>
<span style="position:absolute;left:1249.80px;top:752.02px;font-family:'Liberation Sans', sans-serif;font-size:12.6px;line-height:12.6px;font-weight:400;color:#222;white-space:pre;transform-origin:0 0;transform:scaleX(0.9043);">10/09/2024</span>
<svg style="position:absolute;left:1324px;top:739px;" width="26" height="25" viewBox="0 0 26 25"><path d="M1 1H16V12.6H6.6L3.4 16V12.6H1Z" fill="#111"/><path d="M3.6 4.2H13.4M3.6 6.8H13.4M3.6 9.4H13.4" stroke="#f3f0b8" stroke-width="1"/><circle cx="17" cy="16.4" r="7.2" fill="#d4d0c0" stroke="#444" stroke-width="1.2"/></svg>
<span style="position:absolute;left:1339.00px;top:751.02px;font-family:'Liberation Sans', sans-serif;font-size:11px;line-height:11px;font-weight:400;color:#222;white-space:pre;transform-origin:0 0;transform:scaleX(0.7510);">1</span>
</body></html>
